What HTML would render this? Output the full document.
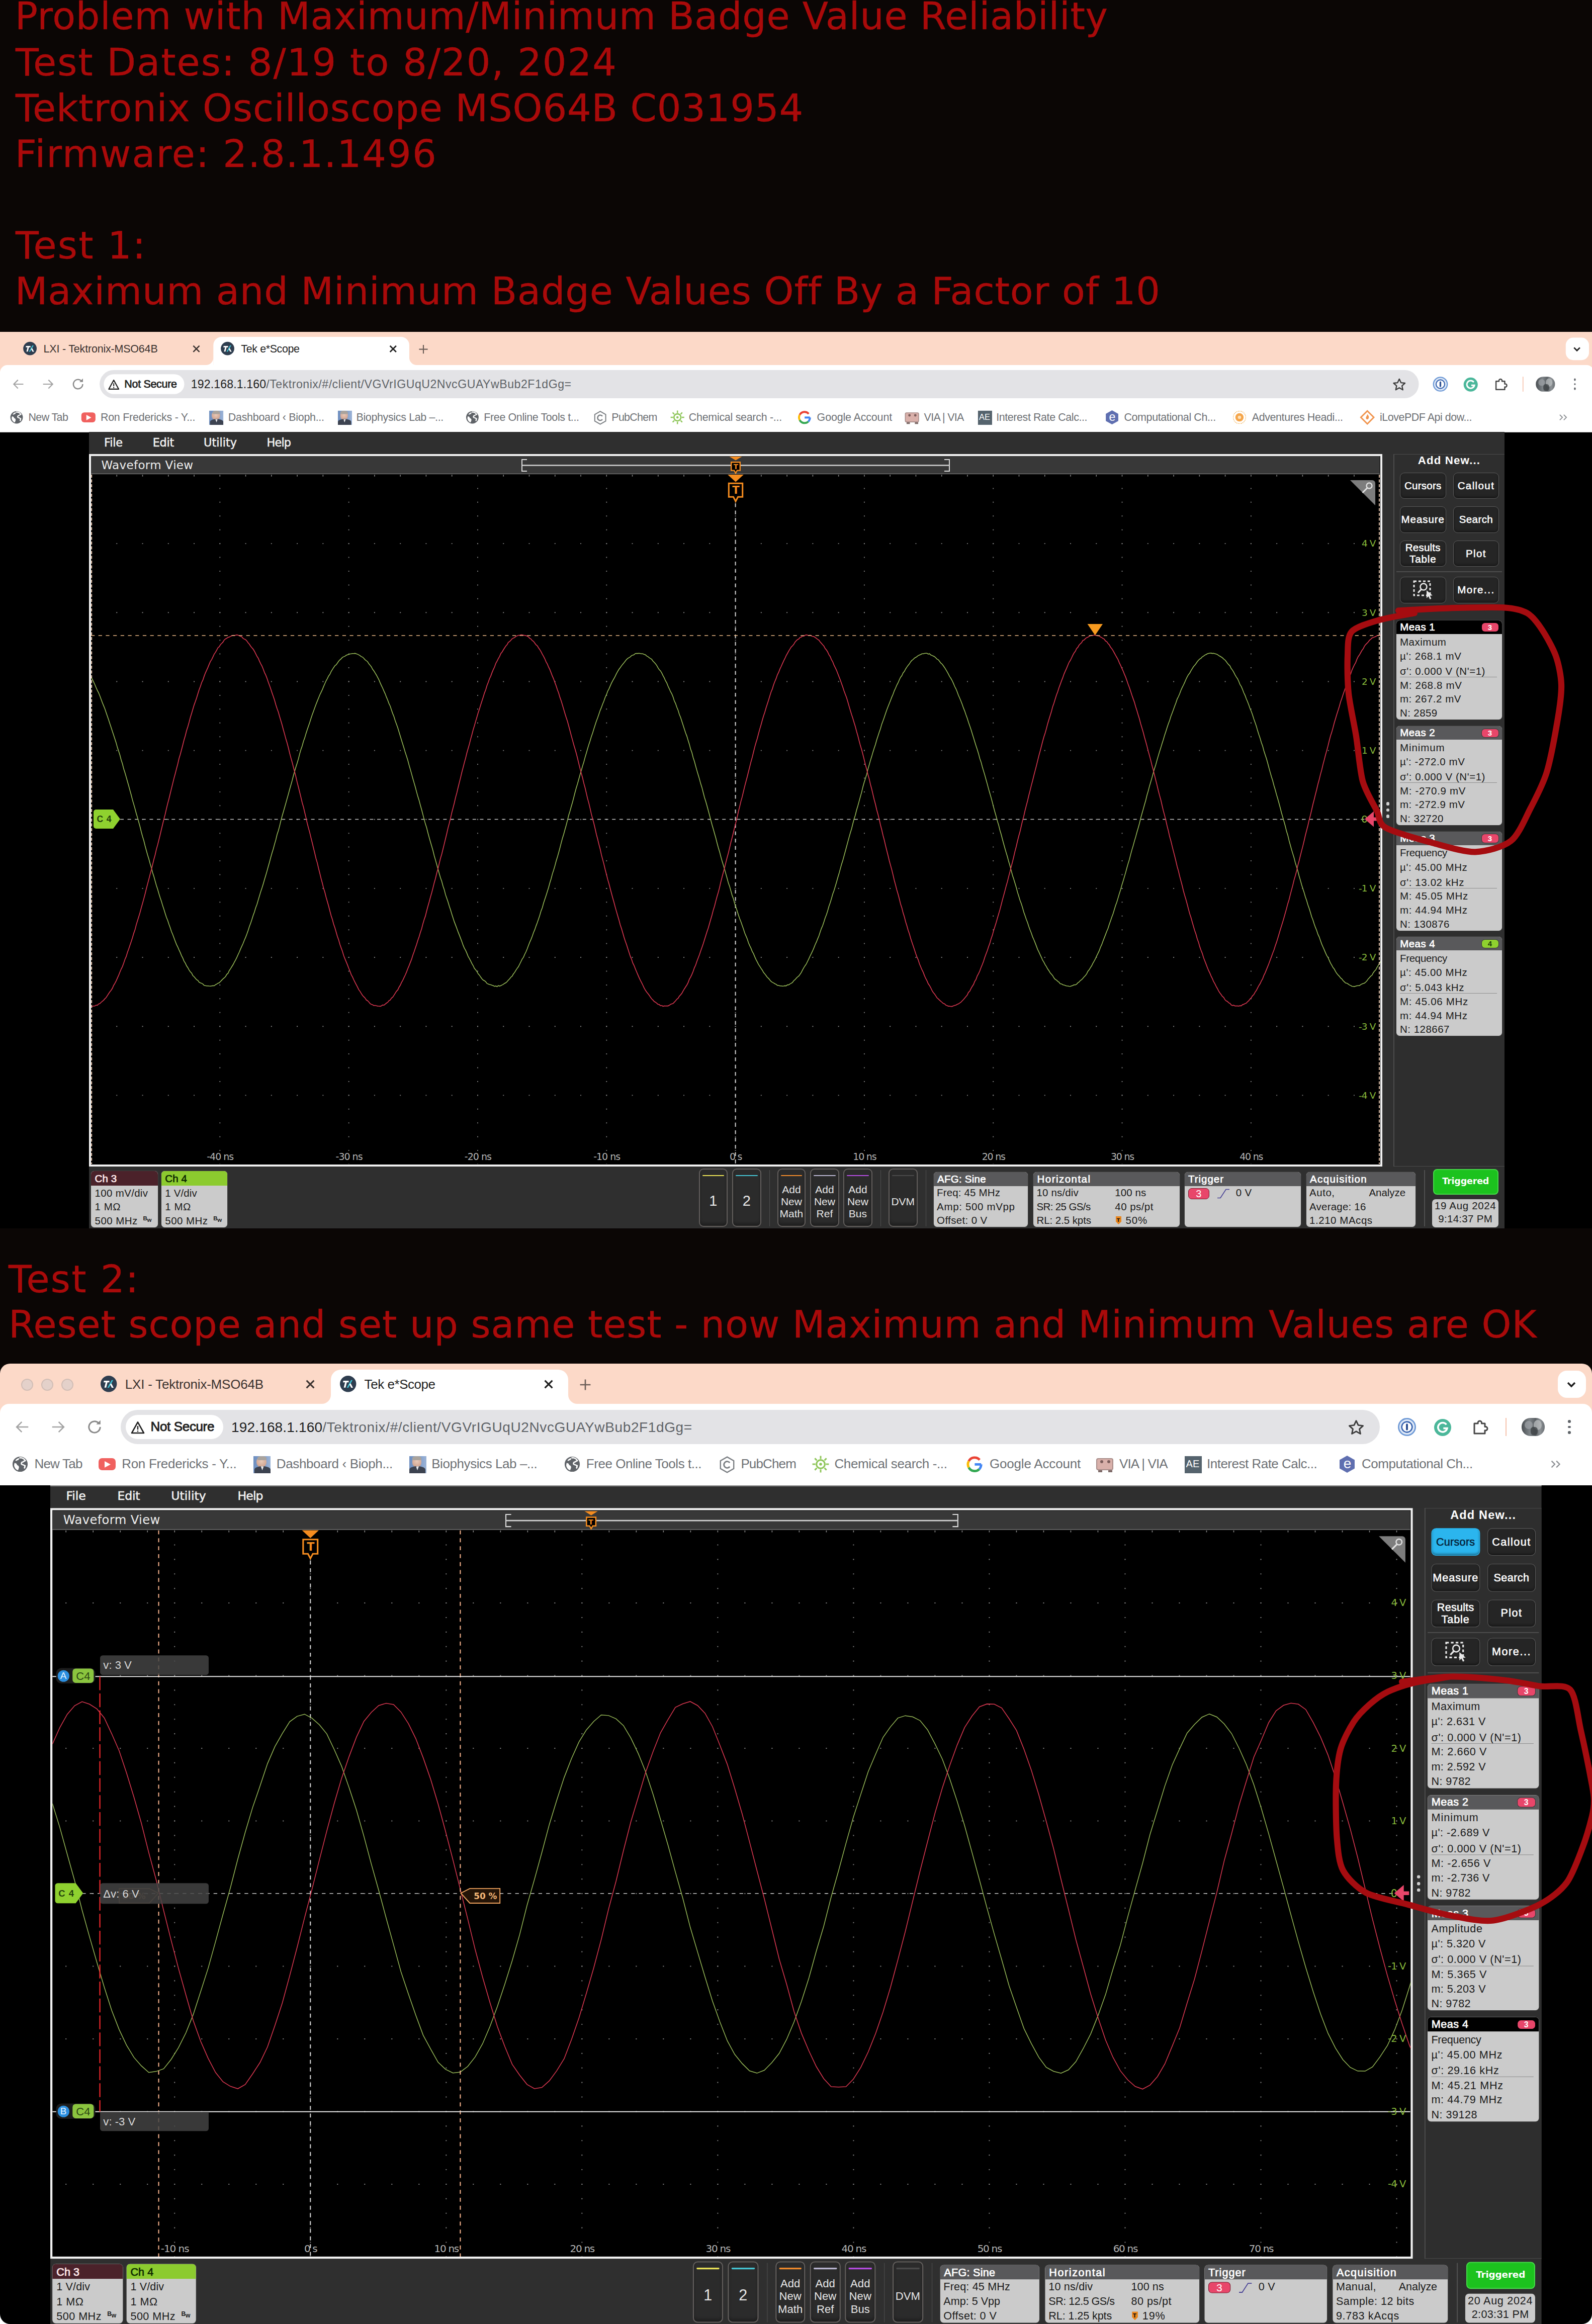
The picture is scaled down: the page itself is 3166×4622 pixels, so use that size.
<!DOCTYPE html>
<html lang="en"><head><meta charset="utf-8"><title>Maximum/Minimum Badge Value Reliability</title><style>
html,body{margin:0;padding:0}
html{width:3166px;height:4622px;overflow:hidden;background:#0b0605}
body{width:3166px;height:4622px;background:#0b0605;position:relative;overflow:hidden}
.b{position:absolute;box-sizing:border-box}
.t{position:absolute;white-space:pre}
svg{position:absolute;overflow:visible}
.ss{position:absolute;left:0;width:3166px;overflow:hidden;background:#000}
.sc{position:absolute;transform-origin:0 0}
</style></head><body>
<span class="t" style="left:29.70px;top:-12.65px;font:400 75px/90.0px 'DejaVu Sans',sans-serif;color:#a90a0a;letter-spacing:0.683px;-webkit-text-stroke:0.45px #a90a0a;">Problem with Maximum/Minimum Badge Value Reliability</span><span class="t" style="left:31.00px;top:78.55px;font:400 75px/90.0px 'DejaVu Sans',sans-serif;color:#a90a0a;letter-spacing:1.988px;-webkit-text-stroke:0.45px #a90a0a;">Test Dates: 8/19 to 8/20, 2024</span><span class="t" style="left:31.00px;top:169.65px;font:400 75px/90.0px 'DejaVu Sans',sans-serif;color:#a90a0a;letter-spacing:0.838px;-webkit-text-stroke:0.45px #a90a0a;">Tektronix Oscilloscope MSO64B C031954</span><span class="t" style="left:29.70px;top:260.75px;font:400 75px/90.0px 'DejaVu Sans',sans-serif;color:#a90a0a;letter-spacing:2.081px;-webkit-text-stroke:0.45px #a90a0a;">Firmware: 2.8.1.1496</span><span class="t" style="left:31.00px;top:442.95px;font:400 75px/90.0px 'DejaVu Sans',sans-serif;color:#a90a0a;letter-spacing:2.311px;-webkit-text-stroke:0.45px #a90a0a;">Test 1:</span><span class="t" style="left:29.70px;top:534.05px;font:400 75px/90.0px 'DejaVu Sans',sans-serif;color:#a90a0a;letter-spacing:0.866px;-webkit-text-stroke:0.45px #a90a0a;">Maximum and Minimum Badge Values Off By a Factor of 10</span>
<div class="ss" style="top:659.7px;height:1783px"><div class="sc" style="left:0;top:0;transform:scale(1.651);width:1919.6px;height:121px"><div class="b" style="left:0.00px;top:0.00px;width:1919.60px;height:56.00px;background:#fcd9c8;"></div><div class="b" style="left:0.00px;top:40.00px;width:1919.60px;height:81.00px;background:#fff;border-radius:9px 9px 0 0;"></div><svg style="left:27.70px;top:12.30px" width="16.2" height="16.2" viewBox="0 0 20 20"><circle cx="10" cy="10" r="10" fill="#2e3d4f"/><path d="M4.2 6.2h6.6v2h-2.3l-1.6 6.4h-2.2l1.6-6.4h-2.6z" fill="#fff"/><path d="M13.6 5.4l-5.2 9.4h1.9l5.2-9.4z" fill="#3ec1d3"/><path d="M11.6 10.6l2.2 4.2h2.3l-2.9-5.4z" fill="#fff"/></svg><span class="t" style="left:52.40px;top:12.70px;font:400 13px/15.6px 'Liberation Sans',sans-serif;color:#3b3330;letter-spacing:-0.110px;">LXI - Tektronix-MSO64B</span><svg style="left:231.50px;top:16px" width="9" height="9" viewBox="0 0 9 9"><path d="M.8.8l7.4 7.4M8.2.8L.8 8.2" stroke="#3b3330" stroke-width="1.5" fill="none"/></svg><div class="b" style="left:257.00px;top:6.00px;width:236.00px;height:35.00px;background:#fff;border-radius:10px 10px 0 0;"></div><svg style="left:248.00px;top:31px" width="9" height="9" viewBox="0 0 9 9"><path d="M9 0v9H0A9 9 0 0 0 9 0z" fill="#fff"/></svg><svg style="left:493.00px;top:31px" width="9" height="9" viewBox="0 0 9 9"><path d="M0 0v9h9A9 9 0 0 1 0 0z" fill="#fff"/></svg><svg style="left:265.60px;top:12.30px" width="16.2" height="16.2" viewBox="0 0 20 20"><circle cx="10" cy="10" r="10" fill="#2e3d4f"/><path d="M4.2 6.2h6.6v2h-2.3l-1.6 6.4h-2.2l1.6-6.4h-2.6z" fill="#fff"/><path d="M13.6 5.4l-5.2 9.4h1.9l5.2-9.4z" fill="#3ec1d3"/><path d="M11.6 10.6l2.2 4.2h2.3l-2.9-5.4z" fill="#fff"/></svg><span class="t" style="left:290.30px;top:12.70px;font:400 13px/15.6px 'Liberation Sans',sans-serif;color:#1f1f1f;letter-spacing:-0.227px;">Tek e*Scope</span><svg style="left:469.20px;top:16px" width="9" height="9" viewBox="0 0 9 9"><path d="M.8.8l7.4 7.4M8.2.8L.8 8.2" stroke="#1f1f1f" stroke-width="1.6" fill="none"/></svg><svg style="left:504.00px;top:14.5px" width="12" height="12" viewBox="0 0 12 12"><path d="M6 .8v10.4M.8 6h10.4" stroke="#6b5e58" stroke-width="1.3" fill="none"/></svg><div class="b" style="left:1885.50px;top:7.00px;width:28.00px;height:27.00px;background:#fff;border-radius:9px;"></div><svg style="left:1895.00px;top:17.5px" width="9" height="6" viewBox="0 0 9 6"><path d="M1 1l3.5 3.5L8 1" stroke="#1f1f1f" stroke-width="1.7" fill="none"/></svg><svg style="left:15.20px;top:56px" width="14" height="14" viewBox="0 0 16 16"><g><path d="M15 8H2M7.6 2.2L1.8 8l5.8 5.8" stroke="#a3a3a3" stroke-width="1.5" fill="none"/></g></svg><svg style="left:50.90px;top:56px" width="14" height="14" viewBox="0 0 16 16"><g transform="translate(16 0) scale(-1 1)"><path d="M15 8H2M7.6 2.2L1.8 8l5.8 5.8" stroke="#a3a3a3" stroke-width="1.5" fill="none"/></g></svg><svg style="left:85.90px;top:55px" width="16" height="16" viewBox="0 0 16 16"><path d="M13.6 8a5.6 5.6 0 1 1-1.7-4" stroke="#8a8a8a" stroke-width="1.5" fill="none"/><path d="M13.9 1.2v4.2H9.7z" fill="#8a8a8a"/></svg><div class="b" style="left:120.00px;top:46.20px;width:1588.60px;height:33.60px;background:#e3e3e6;border-radius:17px;"></div><div class="b" style="left:125.00px;top:51.00px;width:97.00px;height:24.00px;background:#fff;border-radius:12px;"></div><svg style="left:130px;top:56.5px" width="14" height="13" viewBox="0 0 14 13"><path d="M7 1.2L13 12H1z" stroke="#1f1f1f" stroke-width="1.3" fill="none" stroke-linejoin="round"/><path d="M7 5v3.6M7 9.6v1.2" stroke="#1f1f1f" stroke-width="1.2"/></svg><span class="t" style="left:149.80px;top:55.40px;font:400 13px/15.6px 'Liberation Sans',sans-serif;color:#1f1f1f;letter-spacing:-0.183px;-webkit-text-stroke:0.45px #1f1f1f;">Not Secure</span><span class="t" style="left:230.00px;top:54.95px;font:400 14px/16.8px 'Liberation Sans',sans-serif;color:#1f1f1f;letter-spacing:0.082px;">192.168.1.160</span><span class="t" style="left:320.60px;top:54.95px;font:400 14px/16.8px 'Liberation Sans',sans-serif;color:#5f6368;letter-spacing:0.311px;">/Tektronix/#/client/VGVrIGUqU2NvcGUAYwBub2F1dGg=</span><svg style="left:1676.90px;top:54.5px" width="17" height="17" viewBox="0 0 24 24"><path d="M12 2.6l2.9 6.2 6.7.8-5 4.6 1.4 6.7-6-3.4-6 3.4 1.400-6.700-5-4.600 6.700-.800z" stroke="#3c3c3c" stroke-width="2" fill="none" stroke-linejoin="round"/></svg><svg style="left:1726.20px;top:54px" width="18" height="18" viewBox="0 0 18 18"><circle cx="9" cy="9" r="8.3" fill="#dfe9f7" stroke="#6f9ad6" stroke-width="1.4"/><circle cx="9" cy="9" r="5.2" fill="#fff" stroke="#3b66b0" stroke-width="1.3"/><rect x="8" y="5.6" width="2" height="6.8" rx="1" fill="#2c4f91"/></svg><svg style="left:1762.90px;top:54.5px" width="17" height="17" viewBox="0 0 17 17"><circle cx="8.500" cy="8.500" r="8.500" fill="#4bb79a"/><path d="M12.2 5.600A4.600 4.600 0 1 0 13 9.300H9.200" stroke="#fff" stroke-width="1.8" fill="none"/></svg><svg style="left:1799.10px;top:54px" width="18" height="18" viewBox="0 0 18 18"><path d="M3 5.500h3.600a1.900 1.900 0 1 1 3.600 0H13.500v3.300a1.900 1.900 0 1 1 0 3.600V15.500H3z" stroke="#474747" stroke-width="1.5" fill="none" stroke-linejoin="round"/></svg><div class="b" style="left:1833.70px;top:54.00px;width:1.20px;height:18.00px;background:#f6c3ae;"></div><div class="b" style="left:1849.80px;top:54.30px;width:23.00px;height:17.50px;border-radius:9px/8.7px;overflow:hidden;background:linear-gradient(90deg,#4a4e52 0,#7d8387 35%,#5a5f63 60%,#8d9296 80%,#6b7074 100%);"><div class="b" style="left:3.00px;top:3.00px;width:8.00px;height:8.00px;border-radius:50%;background:#9ea3a6;opacity:.7;"></div><div class="b" style="left:12.00px;top:1.50px;width:8.00px;height:10.00px;border-radius:50%;background:#b9bdbf;opacity:.75;"></div><div class="b" style="left:9.00px;top:9.00px;width:7.00px;height:8.00px;background:#3f4346;border-radius:40%;opacity:.8;"></div></div><div class="b" style="left:1895.60px;top:56.00px;width:2.80px;height:2.80px;background:#5f6368;border-radius:50%;"></div><div class="b" style="left:1895.60px;top:61.60px;width:2.80px;height:2.80px;background:#5f6368;border-radius:50%;"></div><div class="b" style="left:1895.60px;top:67.20px;width:2.80px;height:2.80px;background:#5f6368;border-radius:50%;"></div><svg style="left:11.70px;top:95.20px" width="16" height="16" viewBox="0 0 20 20"><circle cx="10" cy="10" r="9.4" fill="#5f6368"/><path d="M3 8.5c2 .2 3 1.2 3.2 2.6 1.6.4 2.6 1.4 2.4 3.2l-1.2 3.4c-2.6-.9-4.6-3.4-4.9-6.4z" fill="#fff"/><path d="M9 2.2c3-.5 6 .9 7.4 3.4-1 .6-2 .6-2.8 1.6-1.4.2-2.2 1.2-2 2.6 1.4 1.4 3.2.6 4 2.2.6 1 .2 2.4-.6 3.2.9-1.2 1.3-2.6 1.3-4.1" fill="none" stroke="#fff" stroke-width="1.6"/><path d="M8.6 2.4c.4 1.6-.4 2.6-2 2.8-.8.8-2 .8-2.6.4 1-1.6 2.6-2.8 4.6-3.2z" fill="#fff"/></svg><span class="t" style="left:34.20px;top:95.30px;font:400 13px/15.6px 'Liberation Sans',sans-serif;color:#6e7175;letter-spacing:-0.378px;">New Tab</span><div class="b" style="left:98.40px;top:97.20px;width:17.00px;height:12.00px;background:#f0615f;border-radius:3.5px;"></div><svg style="left:104.40px;top:100.00px" width="6" height="6.400" viewBox="0 0 6 6.400"><path d="M0 0l6 3.200-6 3.200z" fill="#fff"/></svg><span class="t" style="left:121.10px;top:95.30px;font:400 13px/15.6px 'Liberation Sans',sans-serif;color:#6e7175;letter-spacing:-0.152px;">Ron Fredericks - Y...</span><div class="b" style="left:252.30px;top:94.70px;width:17.00px;height:17.00px;background:linear-gradient(90deg,#6f8fc0 0,#7d9ccb 55%,#9db4d6 100%);overflow:hidden;"><div class="b" style="left:3.20px;top:1.60px;width:9.60px;height:9.40px;border-radius:45% 45% 50% 50%;background:radial-gradient(circle at 50% 40%,#e8c9b8 0,#d5ab98 60%,#b88d7c 100%);"></div><div class="b" style="left:3.40px;top:0.80px;width:9.20px;height:3.60px;background:#a9a39d;border-radius:50% 50% 20% 20%;"></div><div class="b" style="left:0.50px;top:10.60px;width:16.00px;height:7.00px;background:#3c4250;border-radius:50% 50% 0 0;"></div><div class="b" style="left:7.00px;top:10.40px;width:3.00px;height:4.00px;background:#e9e9ec;clip-path:polygon(0 0,100% 0,50% 100%);"></div></div><span class="t" style="left:274.90px;top:95.30px;font:400 13px/15.6px 'Liberation Sans',sans-serif;color:#6e7175;letter-spacing:-0.182px;">Dashboard ‹ Bioph...</span><div class="b" style="left:406.50px;top:94.70px;width:17.00px;height:17.00px;background:linear-gradient(90deg,#6f8fc0 0,#7d9ccb 55%,#9db4d6 100%);overflow:hidden;"><div class="b" style="left:3.20px;top:1.60px;width:9.60px;height:9.40px;border-radius:45% 45% 50% 50%;background:radial-gradient(circle at 50% 40%,#e8c9b8 0,#d5ab98 60%,#b88d7c 100%);"></div><div class="b" style="left:3.40px;top:0.80px;width:9.20px;height:3.60px;background:#a9a39d;border-radius:50% 50% 20% 20%;"></div><div class="b" style="left:0.50px;top:10.60px;width:16.00px;height:7.00px;background:#3c4250;border-radius:50% 50% 0 0;"></div><div class="b" style="left:7.00px;top:10.40px;width:3.00px;height:4.00px;background:#e9e9ec;clip-path:polygon(0 0,100% 0,50% 100%);"></div></div><span class="t" style="left:429.10px;top:95.30px;font:400 13px/15.6px 'Liberation Sans',sans-serif;color:#6e7175;letter-spacing:-0.211px;">Biophysics Lab –...</span><svg style="left:560.80px;top:95.20px" width="16" height="16" viewBox="0 0 20 20"><circle cx="10" cy="10" r="9.4" fill="#5f6368"/><path d="M3 8.5c2 .2 3 1.2 3.2 2.6 1.6.4 2.6 1.4 2.4 3.2l-1.2 3.4c-2.6-.9-4.6-3.4-4.9-6.4z" fill="#fff"/><path d="M9 2.2c3-.5 6 .9 7.4 3.4-1 .6-2 .6-2.8 1.6-1.4.2-2.2 1.2-2 2.6 1.4 1.4 3.2.6 4 2.2.6 1 .2 2.4-.6 3.2.9-1.2 1.3-2.6 1.3-4.1" fill="none" stroke="#fff" stroke-width="1.6"/><path d="M8.6 2.4c.4 1.6-.4 2.6-2 2.8-.8.8-2 .8-2.6.4 1-1.6 2.6-2.8 4.6-3.2z" fill="#fff"/></svg><span class="t" style="left:582.90px;top:95.30px;font:400 13px/15.6px 'Liberation Sans',sans-serif;color:#6e7175;letter-spacing:-0.232px;">Free Online Tools t...</span><svg style="left:714.60px;top:94.70px" width="16" height="17" viewBox="0 0 16 17"><path d="M8 .8l6.600 3.800v7.800L8 16.200 1.400 12.400V4.600z" stroke="#7b7f83" stroke-width="1.2" fill="none"/><path d="M10.600 6.600a3.200 3.200 0 1 0 0 3.800" stroke="#7b7f83" stroke-width="1.500" fill="none"/></svg><span class="t" style="left:736.70px;top:95.30px;font:400 13px/15.6px 'Liberation Sans',sans-serif;color:#6e7175;letter-spacing:-0.430px;">PubChem</span><svg style="left:806.70px;top:94.20px" width="18" height="18" viewBox="0 0 18 18"><circle cx="9" cy="9" r="4.200" stroke="#8fc65a" stroke-width="1.600" fill="none"/><circle cx="9" cy="9" r="1.400" fill="#8fc65a"/><path d="M9 .800v3M9 14.200v3M.800 9h3M14.200 9h3M3.200 3.200l2 2M12.800 12.800l2 2M3.200 14.800l2-2M12.800 5.200l2-2" stroke="#8fc65a" stroke-width="1.500"/></svg><span class="t" style="left:829.70px;top:95.30px;font:400 13px/15.6px 'Liberation Sans',sans-serif;color:#6e7175;letter-spacing:-0.175px;">Chemical search -...</span><svg style="left:961.40px;top:95.20px" width="16" height="16" viewBox="0 0 16 16"><path d="M14.600 8.200H8.200" stroke="#4285f4" stroke-width="2.400" fill="none"/><path d="M13.100 3.700A6.600 6.600 0 0 0 2.300 4.900" stroke="#ea4335" stroke-width="2.400" fill="none"/><path d="M2.300 4.900a6.600 6.600 0 0 0 0 6.400" stroke="#fbbc05" stroke-width="2.400" fill="none"/><path d="M2.300 11.300a6.600 6.600 0 0 0 10.400 1.700" stroke="#34a853" stroke-width="2.400" fill="none"/><path d="M12.700 13a6.600 6.600 0 0 0 1.900-4.800" stroke="#4285f4" stroke-width="2.400" fill="none"/></svg><span class="t" style="left:984.00px;top:95.30px;font:400 13px/15.6px 'Liberation Sans',sans-serif;color:#6e7175;letter-spacing:-0.092px;">Google Account</span><div class="b" style="left:1090.10px;top:96.70px;width:17.00px;height:12.00px;background:#d9b0aa;border-radius:2px;border:1px solid #a98d8a;"></div><div class="b" style="left:1093.60px;top:99.20px;width:3.00px;height:3.00px;background:#7a5c5a;border-radius:50%;"></div><div class="b" style="left:1100.60px;top:99.20px;width:3.00px;height:3.00px;background:#7a5c5a;border-radius:50%;"></div><div class="b" style="left:1091.60px;top:108.70px;width:4.00px;height:2.50px;background:#7d6a68;"></div><div class="b" style="left:1101.60px;top:108.70px;width:4.00px;height:2.50px;background:#7d6a68;"></div><span class="t" style="left:1113.00px;top:95.30px;font:400 13px/15.6px 'Liberation Sans',sans-serif;color:#6e7175;letter-spacing:-0.432px;">VIA | VIA</span><div class="b" style="left:1177.50px;top:94.70px;width:17.00px;height:17.00px;background:#55636d;"></div><span class="t" style="left:1179.25px;top:97.33px;font:400 10px/12.0px 'Liberation Sans',sans-serif;color:#fff;letter-spacing:0.080px;">AE</span><span class="t" style="left:1200.00px;top:95.30px;font:400 13px/15.6px 'Liberation Sans',sans-serif;color:#6e7175;letter-spacing:-0.251px;">Interest Rate Calc...</span><svg style="left:1331.30px;top:94.20px" width="17" height="18" viewBox="0 0 17 18"><path d="M8.500 .500l7.500 4.200v8.600L8.500 17.500 1 13.300V4.700z" fill="#5f6fb0"/></svg><span class="t" style="left:1335.91px;top:94.15px;font:400 14px/16.8px 'Liberation Sans',sans-serif;color:#fff;">e</span><span class="t" style="left:1354.00px;top:95.30px;font:400 13px/15.6px 'Liberation Sans',sans-serif;color:#6e7175;letter-spacing:-0.237px;">Computational Ch...</span><div class="b" style="left:1485.30px;top:95.20px;width:16.00px;height:16.00px;border-radius:50%;border:1.5px dotted #f2b45a;"></div><div class="b" style="left:1488.30px;top:98.20px;width:10.00px;height:10.00px;background:#f5a54a;border-radius:50%;"></div><div class="b" style="left:1491.30px;top:101.20px;width:4.00px;height:4.00px;background:#fde2b8;border-radius:50%;"></div><span class="t" style="left:1508.00px;top:95.30px;font:400 13px/15.6px 'Liberation Sans',sans-serif;color:#6e7175;letter-spacing:-0.241px;">Adventures Headi...</span><svg style="left:1638.40px;top:94.20px" width="18" height="18" viewBox="0 0 18 18"><path d="M9 1.200L16.800 9 9 16.800 1.200 9z" stroke="#f0944d" stroke-width="1.700" fill="none"/><path d="M9 5.200c2 2.200 2.400 3.600 1.200 5.600-.800 1-2.400 .800-2.800-.600C7 8.600 8.600 7.400 9 5.200z" fill="#f0944d"/></svg><span class="t" style="left:1662.00px;top:95.30px;font:400 13px/15.6px 'Liberation Sans',sans-serif;color:#6e7175;letter-spacing:-0.286px;">iLovePDF Api dow...</span><svg style="left:1878.40px;top:99.20px" width="10" height="8" viewBox="0 0 10 8"><path d="M.800 .800L4 4 .800 7.200M5.600 .800L8.800 4 5.600 7.200" stroke="#8a8d91" stroke-width="1.100" fill="none"/></svg></div><div class="sc" style="left:177px;top:199.60px;width:2815px;height:1583.5px"><div class="b" style="left:0.00px;top:0.00px;width:2815.00px;height:1586.50px;background:#2f2f2f;"></div><span class="t" style="left:30.00px;top:7.41px;font:400 22.4px/26.88px 'DejaVu Sans',sans-serif;color:#f2f2f2;letter-spacing:-0.121px;-webkit-text-stroke:0.5px #f2f2f2;">File</span><span class="t" style="left:126.70px;top:7.41px;font:400 22.4px/26.88px 'DejaVu Sans',sans-serif;color:#f2f2f2;letter-spacing:-0.220px;-webkit-text-stroke:0.5px #f2f2f2;">Edit</span><span class="t" style="left:228.00px;top:7.41px;font:400 22.4px/26.88px 'DejaVu Sans',sans-serif;color:#f2f2f2;letter-spacing:0.016px;-webkit-text-stroke:0.5px #f2f2f2;">Utility</span><span class="t" style="left:353.60px;top:7.41px;font:400 22.4px/26.88px 'DejaVu Sans',sans-serif;color:#f2f2f2;letter-spacing:-0.892px;-webkit-text-stroke:0.5px #f2f2f2;">Help</span><div class="b" style="left:2571.60px;top:43.40px;width:22.00px;height:1417.00px;background:#303030;"></div><div class="b" style="left:0.00px;top:43.40px;width:2571.60px;height:1417.00px;background:#000;border:4.4px solid #f0f0f0;"></div><div class="b" style="left:4.40px;top:47.80px;width:2562.80px;height:36.20px;background:#383838;border-bottom:1.6px solid #8d8d8d;"></div><span class="t" style="left:24.50px;top:52.44px;font:400 23px/27.6px 'DejaVu Sans',sans-serif;color:#ededed;letter-spacing:0.335px;">Waveform View</span><svg style="left:4.4px;top:84.5px;overflow:hidden" width="2563.2" height="1371.5" viewBox="0 0 2563.2 1371.5"><g stroke="#808080" stroke-width="1.900" fill="none"><path d="M50.26 137.15H2563.2" stroke-dasharray="2 49.264"/><path d="M50.26 274.30H2563.2" stroke-dasharray="2 49.264"/><path d="M50.26 411.45H2563.2" stroke-dasharray="2 49.264"/><path d="M50.26 548.60H2563.2" stroke-dasharray="2 49.264"/><path d="M50.26 685.75H2563.2" stroke-dasharray="2 49.264"/><path d="M50.26 822.90H2563.2" stroke-dasharray="2 49.264"/><path d="M50.26 960.05H2563.2" stroke-dasharray="2 49.264"/><path d="M50.26 1097.20H2563.2" stroke-dasharray="2 49.264"/><path d="M50.26 1234.35H2563.2" stroke-dasharray="2 49.264"/><path d="M256.32 26.43V1371.5" stroke-dasharray="2 25.430"/><path d="M512.64 26.43V1371.5" stroke-dasharray="2 25.430"/><path d="M768.96 26.43V1371.5" stroke-dasharray="2 25.430"/><path d="M1025.28 26.43V1371.5" stroke-dasharray="2 25.430"/><path d="M1281.60 26.43V1371.5" stroke-dasharray="2 25.430"/><path d="M1537.92 26.43V1371.5" stroke-dasharray="2 25.430"/><path d="M1794.24 26.43V1371.5" stroke-dasharray="2 25.430"/><path d="M2050.56 26.43V1371.5" stroke-dasharray="2 25.430"/><path d="M2306.88 26.43V1371.5" stroke-dasharray="2 25.430"/></g><path d="M50.46 2H2563.2" stroke="#858585" stroke-width="3.400" stroke-dasharray="1.600 49.664" fill="none"/><path d="M1281.6 57V1371.5" stroke="#d2d2d2" stroke-width="2" stroke-dasharray="7.500 7" fill="none"/><path d="M58 685.5H2533.2" stroke="#c8c8c8" stroke-width="1.600" stroke-dasharray="7 7.600" fill="none"/><path d="M0.0,403.3 2.5,406.6 5.0,411.8 7.5,417.3 10.0,423.2 12.5,428.9 15.0,433.6 17.5,439.7 20.0,446.6 22.5,453.2 25.0,459.4 27.5,465.4 30.0,473.1 32.5,480.3 35.0,487.4 37.5,495.3 40.0,502.7 42.5,510.6 45.0,517.9 47.5,525.8 50.0,533.4 52.5,542.6 55.0,549.9 57.5,557.8 60.0,567.5 62.5,575.0 65.0,585.1 67.5,592.8 70.0,601.4 72.5,610.3 75.0,619.0 77.5,628.1 80.0,637.2 82.5,647.1 85.0,655.6 87.5,664.4 90.0,673.7 92.5,682.1 95.0,691.2 97.5,700.3 100.0,710.5 102.5,719.8 105.0,727.8 107.5,738.0 110.0,747.2 112.5,756.2 115.0,764.2 117.5,773.5 120.0,781.6 122.5,791.5 125.0,799.0 127.5,808.1 130.0,816.9 132.5,824.5 135.0,833.3 137.5,841.3 140.0,848.5 142.5,857.1 145.0,864.6 147.5,872.7 150.0,880.6 152.5,886.4 155.0,894.3 157.5,901.0 160.0,908.7 162.5,914.5 165.0,921.2 167.5,927.9 170.0,934.4 172.5,939.3 175.0,945.1 177.5,950.4 180.0,956.6 182.5,961.4 185.0,967.6 187.5,971.4 190.0,976.8 192.5,980.5 195.0,985.2 197.5,988.7 200.0,991.1 202.5,996.2 205.0,998.5 207.5,1001.5 210.0,1004.4 212.5,1005.8 215.0,1009.5 217.5,1010.7 220.0,1011.6 222.5,1013.1 225.0,1015.7 227.5,1016.3 230.0,1016.7 232.5,1016.8 235.0,1017.1 237.5,1017.2 240.0,1016.7 242.5,1016.4 245.0,1016.5 247.5,1014.5 250.0,1013.2 252.5,1011.4 255.0,1010.6 257.5,1008.0 260.0,1005.4 262.5,1002.8 265.0,1000.7 267.5,998.2 270.0,993.8 272.5,991.7 275.0,986.2 277.5,982.6 280.0,978.5 282.5,974.5 285.0,969.7 287.5,965.1 290.0,960.1 292.5,954.5 295.0,949.3 297.5,943.1 300.0,937.6 302.5,932.3 305.0,925.7 307.5,920.1 310.0,913.5 312.5,906.4 315.0,898.6 317.5,891.9 320.0,884.6 322.5,876.6 325.0,869.7 327.5,861.3 330.0,854.8 332.5,846.1 335.0,837.7 337.5,829.4 340.0,822.0 342.5,813.9 345.0,805.3 347.5,797.0 350.0,788.4 352.5,779.3 355.0,770.5 357.5,761.0 360.0,752.3 362.5,744.3 365.0,734.9 367.5,726.4 370.0,715.8 372.5,708.2 375.0,699.1 377.5,688.6 380.0,679.3 382.5,670.8 385.0,662.0 387.5,653.1 390.0,644.1 392.5,635.4 395.0,626.0 397.5,617.2 400.0,608.4 402.5,598.5 405.0,589.7 407.5,581.2 410.0,573.5 412.5,565.1 415.0,555.1 417.5,546.6 420.0,539.5 422.5,530.3 425.0,523.6 427.5,514.9 430.0,507.2 432.5,500.1 435.0,492.8 437.5,484.7 440.0,477.3 442.5,470.4 445.0,463.4 447.5,456.8 450.0,450.4 452.5,444.2 455.0,438.0 457.5,432.8 460.0,427.7 462.5,421.4 465.0,415.8 467.5,410.0 470.0,405.6 472.5,400.5 475.0,397.2 477.5,391.7 480.0,387.7 482.5,383.7 485.0,380.0 487.5,378.1 490.0,374.7 492.5,371.1 495.0,368.3 497.5,366.1 500.0,363.4 502.5,362.1 505.0,361.1 507.5,359.2 510.0,358.3 512.5,357.4 515.0,356.5 517.5,356.2 520.0,355.8 522.5,355.8 525.0,355.4 527.5,356.3 530.0,357.1 532.5,358.4 535.0,359.8 537.5,361.9 540.0,362.8 542.5,365.3 545.0,368.1 547.5,370.0 550.0,372.0 552.5,376.1 555.0,378.9 557.5,382.2 560.0,387.1 562.5,390.3 565.0,394.3 567.5,398.5 570.0,403.1 572.5,407.8 575.0,413.9 577.5,419.3 580.0,424.5 582.5,430.4 585.0,435.8 587.5,442.4 590.0,448.3 592.5,455.1 595.0,460.2 597.5,467.9 600.0,475.1 602.5,481.2 605.0,489.4 607.5,496.2 610.0,503.2 612.5,511.4 615.0,519.7 617.5,528.0 620.0,536.0 622.5,544.0 625.0,552.6 627.5,559.9 630.0,568.0 632.5,577.6 635.0,586.1 637.5,595.1 640.0,604.2 642.5,612.9 645.0,621.5 647.5,631.1 650.0,640.1 652.5,647.9 655.0,657.5 657.5,666.3 660.0,675.9 662.5,685.6 665.0,694.6 667.5,702.3 670.0,712.2 672.5,721.5 675.0,730.3 677.5,738.7 680.0,747.5 682.5,757.7 685.0,766.4 687.5,775.3 690.0,784.2 692.5,793.3 695.0,801.7 697.5,808.8 700.0,818.2 702.5,825.4 705.0,835.4 707.5,842.5 710.0,849.8 712.5,858.3 715.0,865.6 717.5,874.1 720.0,881.8 722.5,889.4 725.0,895.9 727.5,902.5 730.0,909.4 732.5,915.6 735.0,922.1 737.5,928.8 740.0,935.9 742.5,941.8 745.0,946.2 747.5,951.9 750.0,958.1 752.5,962.4 755.0,967.2 757.5,972.3 760.0,976.5 762.5,982.0 765.0,984.7 767.5,988.4 770.0,992.8 772.5,995.4 775.0,999.3 777.5,1002.7 780.0,1005.3 782.5,1006.5 785.0,1008.6 787.5,1012.0 790.0,1013.1 792.5,1014.0 795.0,1014.6 797.5,1015.5 800.0,1016.3 802.5,1017.7 805.0,1016.9 807.5,1018.3 810.0,1016.2 812.5,1017.1 815.0,1016.2 817.5,1014.9 820.0,1013.7 822.5,1011.7 825.0,1010.5 827.5,1008.2 830.0,1005.3 832.5,1002.7 835.0,999.5 837.5,997.4 840.0,993.0 842.5,989.9 845.0,985.7 847.5,981.9 850.0,978.5 852.5,973.5 855.0,968.5 857.5,963.4 860.0,959.9 862.5,954.0 865.0,949.0 867.5,943.0 870.0,936.3 872.5,929.9 875.0,924.4 877.5,918.1 880.0,910.7 882.5,904.9 885.0,897.6 887.5,891.1 890.0,883.7 892.5,876.2 895.0,867.6 897.5,861.3 900.0,852.0 902.5,844.5 905.0,837.0 907.5,829.0 910.0,821.0 912.5,811.8 915.0,803.7 917.5,794.1 920.0,786.5 922.5,778.1 925.0,768.5 927.5,760.6 930.0,751.7 932.5,742.5 935.0,732.6 937.5,723.3 940.0,715.3 942.5,706.0 945.0,697.3 947.5,687.4 950.0,677.3 952.5,669.4 955.0,660.2 957.5,651.7 960.0,642.1 962.5,632.3 965.0,623.0 967.5,614.9 970.0,605.7 972.5,596.8 975.0,588.8 977.5,579.6 980.0,571.7 982.5,562.4 985.0,554.0 987.5,545.2 990.0,536.9 992.5,529.4 995.0,521.1 997.5,514.0 1000.0,505.8 1002.5,497.9 1005.0,490.2 1007.5,483.7 1010.0,476.6 1012.5,469.1 1015.0,463.1 1017.5,456.2 1020.0,450.3 1022.5,443.0 1025.0,437.7 1027.5,430.7 1030.0,426.1 1032.5,420.4 1035.0,414.7 1037.5,409.8 1040.0,405.5 1042.5,400.9 1045.0,395.7 1047.5,391.1 1050.0,387.0 1052.5,383.8 1055.0,380.1 1057.5,376.9 1060.0,374.1 1062.5,370.7 1065.0,367.6 1067.5,365.4 1070.0,363.8 1072.5,362.4 1075.0,359.9 1077.5,358.9 1080.0,358.1 1082.5,355.8 1085.0,355.5 1087.5,355.6 1090.0,355.3 1092.5,355.8 1095.0,356.3 1097.5,356.3 1100.0,357.6 1102.5,358.2 1105.0,360.6 1107.5,361.8 1110.0,364.0 1112.5,365.6 1115.0,367.0 1117.5,370.7 1120.0,373.2 1122.5,376.0 1125.0,379.3 1127.5,383.8 1130.0,387.8 1132.5,390.2 1135.0,394.4 1137.5,399.7 1140.0,404.1 1142.5,410.0 1145.0,414.2 1147.5,420.5 1150.0,425.8 1152.5,431.5 1155.0,435.9 1157.5,442.0 1160.0,450.0 1162.5,455.1 1165.0,462.5 1167.5,468.4 1170.0,476.7 1172.5,482.8 1175.0,490.6 1177.5,498.2 1180.0,506.1 1182.5,513.8 1185.0,520.1 1187.5,528.6 1190.0,536.4 1192.5,546.1 1195.0,552.8 1197.5,562.8 1200.0,570.3 1202.5,579.7 1205.0,588.6 1207.5,597.0 1210.0,605.4 1212.5,614.6 1215.0,622.4 1217.5,632.3 1220.0,642.0 1222.5,649.8 1225.0,658.5 1227.5,667.7 1230.0,677.0 1232.5,686.7 1235.0,696.3 1237.5,704.8 1240.0,713.8 1242.5,722.5 1245.0,732.5 1247.5,741.7 1250.0,749.9 1252.5,759.6 1255.0,768.6 1257.5,776.5 1260.0,785.0 1262.5,793.9 1265.0,802.7 1267.5,812.1 1270.0,818.9 1272.5,827.7 1275.0,836.9 1277.5,843.4 1280.0,852.9 1282.5,860.1 1285.0,867.8 1287.5,875.8 1290.0,883.1 1292.5,889.2 1295.0,896.4 1297.5,903.5 1300.0,911.6 1302.5,917.4 1305.0,923.3 1307.5,931.0 1310.0,936.9 1312.5,941.9 1315.0,948.4 1317.5,952.6 1320.0,958.9 1322.5,964.3 1325.0,969.2 1327.5,974.1 1330.0,977.8 1332.5,981.9 1335.0,985.5 1337.5,990.1 1340.0,992.9 1342.5,996.3 1345.0,999.8 1347.5,1001.9 1350.0,1004.9 1352.5,1008.0 1355.0,1009.7 1357.5,1010.9 1360.0,1012.5 1362.5,1013.6 1365.0,1015.7 1367.5,1015.7 1370.0,1016.8 1372.5,1016.7 1375.0,1017.3 1377.5,1017.0 1380.0,1016.4 1382.5,1016.7 1385.0,1014.6 1387.5,1014.7 1390.0,1012.9 1392.5,1011.7 1395.0,1009.9 1397.5,1006.5 1400.0,1004.4 1402.5,1001.6 1405.0,999.0 1407.5,997.1 1410.0,993.7 1412.5,990.1 1415.0,985.1 1417.5,980.7 1420.0,976.7 1422.5,973.1 1425.0,968.0 1427.5,962.8 1430.0,957.3 1432.5,952.4 1435.0,947.2 1437.5,941.4 1440.0,935.0 1442.5,929.7 1445.0,923.4 1447.5,917.5 1450.0,909.8 1452.5,902.6 1455.0,897.0 1457.5,889.5 1460.0,881.4 1462.5,875.2 1465.0,867.5 1467.5,858.5 1470.0,851.4 1472.5,843.2 1475.0,834.3 1477.5,827.4 1480.0,819.3 1482.5,810.7 1485.0,801.7 1487.5,793.6 1490.0,784.4 1492.5,775.3 1495.0,767.6 1497.5,758.4 1500.0,749.3 1502.5,740.0 1505.0,730.6 1507.5,721.4 1510.0,712.5 1512.5,704.5 1515.0,694.5 1517.5,684.8 1520.0,677.3 1522.5,667.0 1525.0,658.7 1527.5,649.6 1530.0,640.5 1532.5,631.6 1535.0,621.3 1537.5,612.2 1540.0,604.4 1542.5,596.2 1545.0,586.1 1547.5,577.5 1550.0,568.6 1552.5,560.6 1555.0,551.9 1557.5,543.9 1560.0,536.7 1562.5,527.5 1565.0,520.1 1567.5,512.3 1570.0,505.3 1572.5,496.4 1575.0,489.7 1577.5,482.7 1580.0,475.2 1582.5,467.9 1585.0,461.5 1587.5,455.2 1590.0,449.0 1592.5,442.4 1595.0,436.7 1597.5,429.8 1600.0,424.5 1602.5,418.5 1605.0,414.0 1607.5,408.0 1610.0,403.0 1612.5,399.8 1615.0,394.2 1617.5,391.3 1620.0,386.5 1622.5,382.6 1625.0,379.2 1627.5,376.3 1630.0,372.2 1632.5,369.4 1635.0,367.5 1637.5,364.9 1640.0,363.5 1642.5,361.8 1645.0,359.8 1647.5,358.7 1650.0,357.7 1652.5,356.3 1655.0,356.2 1657.5,355.6 1660.0,355.3 1662.5,355.3 1665.0,356.8 1667.5,356.2 1670.0,358.5 1672.5,359.6 1675.0,360.8 1677.5,362.0 1680.0,364.3 1682.5,366.9 1685.0,368.1 1687.5,371.2 1690.0,374.6 1692.5,376.7 1695.0,380.0 1697.5,383.7 1700.0,387.6 1702.5,391.8 1705.0,396.3 1707.5,401.4 1710.0,405.0 1712.5,409.5 1715.0,414.9 1717.5,421.0 1720.0,425.8 1722.5,431.7 1725.0,438.7 1727.5,444.2 1730.0,450.2 1732.5,456.8 1735.0,463.9 1737.5,470.1 1740.0,477.4 1742.5,484.2 1745.0,492.2 1747.5,499.5 1750.0,506.8 1752.5,514.9 1755.0,522.9 1757.5,531.3 1760.0,539.2 1762.5,546.8 1765.0,554.9 1767.5,564.5 1770.0,571.4 1772.5,581.0 1775.0,589.4 1777.5,597.6 1780.0,606.8 1782.5,615.6 1785.0,625.1 1787.5,633.8 1790.0,642.4 1792.5,651.6 1795.0,661.5 1797.5,670.7 1800.0,679.4 1802.5,688.9 1805.0,696.9 1807.5,707.0 1810.0,715.3 1812.5,725.0 1815.0,734.3 1817.5,743.2 1820.0,751.9 1822.5,760.0 1825.0,769.6 1827.5,777.7 1830.0,787.1 1832.5,796.7 1835.0,804.2 1837.5,812.5 1840.0,820.7 1842.5,830.4 1845.0,838.2 1847.5,846.4 1850.0,853.1 1852.5,861.0 1855.0,869.9 1857.5,877.0 1860.0,884.6 1862.5,890.8 1865.0,898.7 1867.5,905.5 1870.0,911.7 1872.5,919.1 1875.0,924.8 1877.5,930.9 1880.0,937.4 1882.5,944.1 1885.0,949.1 1887.5,954.6 1890.0,959.9 1892.5,965.7 1895.0,969.7 1897.5,974.6 1900.0,978.3 1902.5,983.0 1905.0,986.5 1907.5,990.8 1910.0,993.6 1912.5,996.4 1915.0,1000.8 1917.5,1003.8 1920.0,1005.1 1922.5,1007.6 1925.0,1009.4 1927.5,1012.4 1930.0,1012.7 1932.5,1014.4 1935.0,1014.9 1937.5,1015.9 1940.0,1016.7 1942.5,1017.1 1945.0,1017.5 1947.5,1017.7 1950.0,1016.8 1952.5,1016.0 1955.0,1014.6 1957.5,1014.8 1960.0,1013.4 1962.5,1010.7 1965.0,1008.9 1967.5,1006.1 1970.0,1004.5 1972.5,1001.7 1975.0,998.8 1977.5,996.3 1980.0,992.9 1982.5,987.7 1985.0,984.8 1987.5,980.6 1990.0,976.8 1992.5,971.7 1995.0,967.4 1997.5,962.7 2000.0,957.2 2002.5,952.2 2005.0,946.9 2007.5,940.0 2010.0,934.7 2012.5,927.8 2015.0,921.4 2017.5,914.9 2020.0,908.2 2022.5,902.5 2025.0,894.5 2027.5,887.4 2030.0,880.1 2032.5,873.5 2035.0,865.2 2037.5,857.0 2040.0,850.3 2042.5,841.9 2045.0,833.4 2047.5,825.7 2050.0,816.5 2052.5,808.6 2055.0,800.1 2057.5,791.6 2060.0,782.3 2062.5,773.4 2065.0,765.5 2067.5,755.6 2070.0,746.4 2072.5,738.1 2075.0,728.9 2077.5,720.6 2080.0,711.3 2082.5,702.7 2085.0,693.7 2087.5,683.2 2090.0,674.2 2092.5,665.6 2095.0,656.5 2097.5,648.0 2100.0,637.5 2102.5,629.1 2105.0,619.4 2107.5,611.0 2110.0,602.4 2112.5,593.1 2115.0,584.6 2117.5,576.9 2120.0,567.6 2122.5,559.1 2125.0,550.8 2127.5,543.1 2130.0,534.7 2132.5,527.0 2135.0,518.4 2137.5,511.0 2140.0,503.1 2142.5,495.5 2145.0,488.9 2147.5,480.8 2150.0,474.3 2152.5,467.6 2155.0,460.5 2157.5,454.1 2160.0,446.4 2162.5,441.5 2165.0,435.7 2167.5,429.0 2170.0,423.4 2172.5,418.5 2175.0,413.1 2177.5,407.2 2180.0,402.1 2182.5,397.7 2185.0,394.7 2187.5,389.8 2190.0,385.8 2192.5,381.8 2195.0,379.0 2197.5,375.7 2200.0,372.0 2202.5,369.0 2205.0,366.7 2207.5,365.1 2210.0,362.3 2212.5,360.9 2215.0,358.9 2217.5,357.7 2220.0,356.3 2222.5,355.6 2225.0,355.0 2227.5,354.9 2230.0,355.6 2232.5,355.3 2235.0,356.1 2237.5,356.8 2240.0,357.6 2242.5,359.6 2245.0,361.0 2247.5,362.5 2250.0,364.2 2252.5,366.6 2255.0,368.5 2257.5,371.5 2260.0,375.1 2262.5,377.9 2265.0,380.3 2267.5,385.6 2270.0,388.6 2272.5,392.8 2275.0,397.8 2277.5,402.2 2280.0,405.7 2282.5,411.0 2285.0,417.4 2287.5,421.1 2290.0,427.1 2292.5,433.8 2295.0,438.9 2297.5,445.8 2300.0,451.5 2302.5,457.9 2305.0,465.3 2307.5,471.0 2310.0,478.0 2312.5,485.9 2315.0,493.1 2317.5,500.2 2320.0,509.1 2322.5,517.0 2325.0,524.3 2327.5,532.9 2330.0,539.7 2332.5,549.2 2335.0,557.1 2337.5,564.6 2340.0,573.3 2342.5,582.9 2345.0,591.9 2347.5,600.7 2350.0,608.5 2352.5,618.3 2355.0,626.5 2357.5,635.9 2360.0,644.3 2362.5,653.2 2365.0,662.5 2367.5,672.5 2370.0,681.1 2372.5,689.7 2375.0,698.8 2377.5,709.1 2380.0,716.9 2382.5,727.4 2385.0,736.5 2387.5,745.6 2390.0,753.9 2392.5,761.9 2395.0,772.0 2397.5,780.1 2400.0,788.2 2402.5,798.0 2405.0,806.4 2407.5,815.5 2410.0,823.5 2412.5,830.9 2415.0,839.8 2417.5,846.8 2420.0,855.5 2422.5,862.4 2425.0,870.5 2427.5,879.2 2430.0,885.4 2432.5,893.6 2435.0,900.4 2437.5,906.4 2440.0,914.2 2442.5,919.3 2445.0,926.5 2447.5,933.6 2450.0,939.3 2452.5,944.9 2455.0,950.9 2457.5,956.4 2460.0,960.1 2462.5,965.9 2465.0,971.4 2467.5,975.7 2470.0,980.3 2472.5,983.3 2475.0,988.1 2477.5,992.1 2480.0,994.9 2482.5,997.6 2485.0,1000.9 2487.5,1002.9 2490.0,1006.3 2492.5,1008.6 2495.0,1011.1 2497.5,1011.4 2500.0,1013.0 2502.5,1014.9 2505.0,1015.9 2507.5,1017.5 2510.0,1017.8 2512.5,1018.1 2515.0,1017.3 2517.5,1016.4 2520.0,1016.3 2522.5,1016.2 2525.0,1014.3 2527.5,1012.9 2530.0,1012.1 2532.5,1011.2 2535.0,1009.3 2537.5,1006.4 2540.0,1002.9 2542.5,1000.3 2545.0,997.4 2547.5,995.5 2550.0,990.7 2552.5,987.3 2555.0,984.8 2557.5,979.8 2560.0,975.8 2562.5,971.5 2565.0,966.9" stroke="#98bb58" stroke-width="1.550" fill="none"/><path d="M0.0,1056.7 2.5,1057.7 5.0,1056.8 7.5,1056.8 10.0,1055.0 12.5,1055.4 15.0,1052.7 17.5,1052.1 20.0,1049.5 22.5,1047.3 25.0,1045.4 27.5,1042.4 30.0,1040.0 32.5,1036.1 35.0,1032.3 37.5,1028.5 40.0,1025.5 42.5,1021.5 45.0,1015.7 47.5,1011.7 50.0,1006.8 52.5,1001.2 55.0,995.6 57.5,989.3 60.0,983.3 62.5,978.3 65.0,971.5 67.5,964.0 70.0,958.4 72.5,949.9 75.0,943.3 77.5,935.7 80.0,928.6 82.5,920.7 85.0,912.1 87.5,905.1 90.0,895.1 92.5,887.0 95.0,878.9 97.5,870.8 100.0,861.3 102.5,852.6 105.0,843.4 107.5,834.0 110.0,823.7 112.5,814.1 115.0,804.8 117.5,795.0 120.0,786.0 122.5,775.6 125.0,765.2 127.5,756.2 130.0,745.1 132.5,736.4 135.0,726.3 137.5,716.2 140.0,705.5 142.5,695.3 145.0,684.8 147.5,675.4 150.0,664.4 152.5,654.1 155.0,644.7 157.5,634.5 160.0,624.1 162.5,614.1 165.0,603.9 167.5,594.8 170.0,584.9 172.5,575.6 175.0,564.5 177.5,556.5 180.0,547.0 182.5,537.5 185.0,527.5 187.5,519.3 190.0,509.1 192.5,501.5 195.0,492.6 197.5,483.1 200.0,475.0 202.5,466.6 205.0,458.1 207.5,451.3 210.0,443.9 212.5,435.8 215.0,427.7 217.5,421.3 220.0,413.5 222.5,408.4 225.0,400.9 227.5,394.3 230.0,388.9 232.5,383.4 235.0,377.1 237.5,371.4 240.0,367.6 242.5,362.3 245.0,356.8 247.5,353.4 250.0,348.8 252.5,344.2 255.0,342.2 257.5,338.0 260.0,335.5 262.5,332.9 265.0,328.7 267.5,326.7 270.0,325.2 272.5,323.6 275.0,322.9 277.5,321.5 280.0,320.5 282.5,319.6 285.0,319.8 287.5,319.3 290.0,318.7 292.5,319.3 295.0,320.4 297.5,321.6 300.0,322.6 302.5,325.6 305.0,327.1 307.5,328.2 310.0,330.9 312.5,334.5 315.0,337.2 317.5,341.2 320.0,344.3 322.5,347.1 325.0,351.2 327.5,356.1 330.0,361.2 332.5,365.0 335.0,370.8 337.5,376.1 340.0,380.7 342.5,386.8 345.0,393.6 347.5,398.7 350.0,405.0 352.5,412.5 355.0,419.2 357.5,426.2 360.0,433.9 362.5,441.1 365.0,448.6 367.5,457.4 370.0,465.2 372.5,472.0 375.0,481.0 377.5,489.2 380.0,497.7 382.5,507.2 385.0,516.1 387.5,525.6 390.0,533.7 392.5,543.2 395.0,553.8 397.5,563.1 400.0,571.9 402.5,581.8 405.0,591.3 407.5,600.9 410.0,611.9 412.5,621.5 415.0,631.5 417.5,641.9 420.0,652.5 422.5,660.9 425.0,671.8 427.5,682.1 430.0,693.2 432.5,702.9 435.0,711.9 437.5,722.4 440.0,732.3 442.5,742.8 445.0,753.0 447.5,763.7 450.0,772.1 452.5,783.0 455.0,792.7 457.5,803.1 460.0,812.2 462.5,822.4 465.0,830.3 467.5,840.4 470.0,849.1 472.5,857.8 475.0,867.5 477.5,877.0 480.0,884.5 482.5,894.0 485.0,901.1 487.5,909.8 490.0,918.5 492.5,925.2 495.0,934.2 497.5,941.3 500.0,948.0 502.5,956.5 505.0,962.9 507.5,968.9 510.0,974.9 512.5,981.5 515.0,987.5 517.5,994.3 520.0,998.8 522.5,1004.5 525.0,1009.7 527.5,1014.4 530.0,1019.2 532.5,1024.4 535.0,1027.6 537.5,1031.8 540.0,1035.8 542.5,1038.3 545.0,1040.9 547.5,1044.8 550.0,1046.2 552.5,1048.7 555.0,1051.9 557.5,1053.6 560.0,1054.2 562.5,1055.9 565.0,1055.5 567.5,1056.2 570.0,1056.9 572.5,1057.0 575.0,1057.4 577.5,1056.5 580.0,1054.6 582.5,1055.2 585.0,1053.1 587.5,1051.0 590.0,1049.4 592.5,1046.2 595.0,1044.9 597.5,1041.1 600.0,1039.1 602.5,1035.4 605.0,1031.4 607.5,1027.3 610.0,1024.9 612.5,1019.5 615.0,1015.5 617.5,1009.8 620.0,1005.6 622.5,1000.1 625.0,995.0 627.5,989.1 630.0,982.5 632.5,976.6 635.0,970.1 637.5,963.9 640.0,955.8 642.5,949.1 645.0,941.6 647.5,934.3 650.0,925.9 652.5,919.0 655.0,910.6 657.5,903.3 660.0,893.4 662.5,884.9 665.0,877.9 667.5,867.8 670.0,858.5 672.5,849.8 675.0,840.2 677.5,831.8 680.0,822.1 682.5,811.9 685.0,803.2 687.5,792.8 690.0,783.8 692.5,773.3 695.0,763.0 697.5,754.7 700.0,744.5 702.5,734.4 705.0,724.0 707.5,713.7 710.0,702.6 712.5,693.4 715.0,683.1 717.5,672.1 720.0,662.6 722.5,653.0 725.0,641.9 727.5,632.9 730.0,622.2 732.5,612.1 735.0,602.4 737.5,591.8 740.0,582.4 742.5,572.6 745.0,563.6 747.5,553.2 750.0,544.5 752.5,535.9 755.0,525.9 757.5,517.0 760.0,507.3 762.5,499.3 765.0,490.4 767.5,482.0 770.0,473.3 772.5,466.1 775.0,457.8 777.5,450.1 780.0,442.2 782.5,434.1 785.0,427.7 787.5,419.2 790.0,413.0 792.5,405.7 795.0,400.6 797.5,393.6 800.0,387.6 802.5,382.5 805.0,375.3 807.5,370.9 810.0,365.8 812.5,361.6 815.0,355.8 817.5,352.7 820.0,348.5 822.5,344.5 825.0,340.7 827.5,338.1 830.0,333.4 832.5,331.9 835.0,329.2 837.5,326.4 840.0,324.9 842.5,323.9 845.0,321.6 847.5,320.6 850.0,319.5 852.5,319.5 855.0,318.6 857.5,318.5 860.0,319.4 862.5,319.7 865.0,320.1 867.5,321.2 870.0,322.6 872.5,325.5 875.0,326.8 877.5,329.9 880.0,331.6 882.5,334.9 885.0,338.3 887.5,340.3 890.0,344.5 892.5,347.9 895.0,352.1 897.5,357.2 900.0,361.3 902.5,366.3 905.0,372.3 907.5,376.7 910.0,382.7 912.5,387.6 915.0,394.1 917.5,400.7 920.0,406.3 922.5,413.4 925.0,420.0 927.5,427.7 930.0,434.3 932.5,442.9 935.0,449.7 937.5,458.1 940.0,466.5 942.5,475.0 945.0,483.1 947.5,490.5 950.0,499.8 952.5,509.0 955.0,518.6 957.5,527.6 960.0,536.9 962.5,545.2 965.0,554.0 967.5,563.7 970.0,574.4 972.5,584.4 975.0,593.8 977.5,602.8 980.0,613.6 982.5,622.5 985.0,633.4 987.5,644.1 990.0,653.1 992.5,663.6 995.0,674.9 997.5,684.2 1000.0,693.5 1002.5,704.0 1005.0,715.3 1007.5,724.5 1010.0,735.1 1012.5,744.3 1015.0,755.9 1017.5,765.4 1020.0,774.6 1022.5,785.2 1025.0,794.8 1027.5,804.9 1030.0,813.3 1032.5,823.0 1035.0,832.5 1037.5,841.8 1040.0,850.5 1042.5,860.1 1045.0,868.9 1047.5,877.5 1050.0,885.9 1052.5,895.4 1055.0,902.8 1057.5,911.3 1060.0,920.0 1062.5,927.8 1065.0,934.5 1067.5,942.4 1070.0,950.2 1072.5,957.9 1075.0,963.7 1077.5,971.5 1080.0,976.3 1082.5,982.7 1085.0,988.8 1087.5,994.6 1090.0,1000.3 1092.5,1005.7 1095.0,1010.3 1097.5,1015.5 1100.0,1020.9 1102.5,1025.3 1105.0,1028.9 1107.5,1032.0 1110.0,1035.3 1112.5,1039.1 1115.0,1042.5 1117.5,1044.9 1120.0,1047.8 1122.5,1049.2 1125.0,1051.2 1127.5,1053.4 1130.0,1053.8 1132.5,1056.2 1135.0,1055.8 1137.5,1057.3 1140.0,1056.7 1142.5,1056.7 1145.0,1056.5 1147.5,1056.6 1150.0,1055.3 1152.5,1053.5 1155.0,1052.6 1157.5,1051.7 1160.0,1049.1 1162.5,1046.5 1165.0,1043.3 1167.5,1041.5 1170.0,1037.3 1172.5,1034.6 1175.0,1031.6 1177.5,1026.9 1180.0,1022.7 1182.5,1018.8 1185.0,1015.0 1187.5,1010.1 1190.0,1003.3 1192.5,999.2 1195.0,993.8 1197.5,987.7 1200.0,980.6 1202.5,975.3 1205.0,967.7 1207.5,961.3 1210.0,954.8 1212.5,947.3 1215.0,940.2 1217.5,933.1 1220.0,925.0 1222.5,917.0 1225.0,909.1 1227.5,901.8 1230.0,893.1 1232.5,884.2 1235.0,875.8 1237.5,865.9 1240.0,858.3 1242.5,848.1 1245.0,839.0 1247.5,830.5 1250.0,821.1 1252.5,810.0 1255.0,800.3 1257.5,790.7 1260.0,781.7 1262.5,771.4 1265.0,761.5 1267.5,752.5 1270.0,741.9 1272.5,731.2 1275.0,721.7 1277.5,711.8 1280.0,701.3 1282.5,691.4 1285.0,681.3 1287.5,669.9 1290.0,660.1 1292.5,649.6 1295.0,640.9 1297.5,630.2 1300.0,619.9 1302.5,610.3 1305.0,601.0 1307.5,590.7 1310.0,580.9 1312.5,570.9 1315.0,562.1 1317.5,551.7 1320.0,541.6 1322.5,532.8 1325.0,524.7 1327.5,515.0 1330.0,505.9 1332.5,497.4 1335.0,488.3 1337.5,479.8 1340.0,472.4 1342.5,463.7 1345.0,455.9 1347.5,448.3 1350.0,440.0 1352.5,432.0 1355.0,426.1 1357.5,417.8 1360.0,411.3 1362.5,405.4 1365.0,398.1 1367.5,393.2 1370.0,386.7 1372.5,381.5 1375.0,375.8 1377.5,370.3 1380.0,365.5 1382.5,359.9 1385.0,355.5 1387.5,350.8 1390.0,346.9 1392.5,342.8 1395.0,340.5 1397.5,337.6 1400.0,333.2 1402.5,330.3 1405.0,328.0 1407.5,326.8 1410.0,323.8 1412.5,323.1 1415.0,320.8 1417.5,321.2 1420.0,319.6 1422.5,318.6 1425.0,319.2 1427.5,320.0 1430.0,319.1 1432.5,320.6 1435.0,321.7 1437.5,321.8 1440.0,323.8 1442.5,325.4 1445.0,327.6 1447.5,329.0 1450.0,332.6 1452.5,335.4 1455.0,338.2 1457.5,341.0 1460.0,345.8 1462.5,348.6 1465.0,352.7 1467.5,358.1 1470.0,361.7 1472.5,367.8 1475.0,372.0 1477.5,378.6 1480.0,383.7 1482.5,388.8 1485.0,395.2 1487.5,401.7 1490.0,408.0 1492.5,415.2 1495.0,422.2 1497.5,430.0 1500.0,436.8 1502.5,443.2 1505.0,451.5 1507.5,460.4 1510.0,468.7 1512.5,476.9 1515.0,484.4 1517.5,492.9 1520.0,501.0 1522.5,510.7 1525.0,519.2 1527.5,529.3 1530.0,538.6 1532.5,546.7 1535.0,556.3 1537.5,566.2 1540.0,576.8 1542.5,585.6 1545.0,596.3 1547.5,604.7 1550.0,615.8 1552.5,625.0 1555.0,635.6 1557.5,646.2 1560.0,655.5 1562.5,666.5 1565.0,675.2 1567.5,685.4 1570.0,696.7 1572.5,706.2 1575.0,717.2 1577.5,726.5 1580.0,737.4 1582.5,747.5 1585.0,757.3 1587.5,767.8 1590.0,776.9 1592.5,785.9 1595.0,796.1 1597.5,807.0 1600.0,816.1 1602.5,826.0 1605.0,834.2 1607.5,843.8 1610.0,854.0 1612.5,861.6 1615.0,871.6 1617.5,879.2 1620.0,889.2 1622.5,897.0 1625.0,905.9 1627.5,913.0 1630.0,922.0 1632.5,929.7 1635.0,937.0 1637.5,944.5 1640.0,952.2 1642.5,959.1 1645.0,964.8 1647.5,972.7 1650.0,978.8 1652.5,984.7 1655.0,989.6 1657.5,996.4 1660.0,1002.0 1662.5,1006.6 1665.0,1012.5 1667.5,1015.9 1670.0,1020.5 1672.5,1025.9 1675.0,1030.0 1677.5,1032.8 1680.0,1036.6 1682.5,1040.5 1685.0,1042.7 1687.5,1045.1 1690.0,1047.3 1692.5,1049.5 1695.0,1051.7 1697.5,1052.5 1700.0,1055.1 1702.5,1056.1 1705.0,1057.1 1707.5,1057.0 1710.0,1057.7 1712.5,1057.6 1715.0,1056.5 1717.5,1055.6 1720.0,1055.0 1722.5,1053.5 1725.0,1052.6 1727.5,1050.9 1730.0,1049.2 1732.5,1046.5 1735.0,1044.0 1737.5,1041.0 1740.0,1038.0 1742.5,1035.0 1745.0,1029.6 1747.5,1027.3 1750.0,1022.1 1752.5,1017.8 1755.0,1014.0 1757.5,1007.7 1760.0,1003.9 1762.5,996.8 1765.0,992.4 1767.5,987.0 1770.0,980.3 1772.5,974.3 1775.0,967.8 1777.5,959.7 1780.0,953.0 1782.5,946.5 1785.0,938.8 1787.5,932.1 1790.0,923.0 1792.5,916.1 1795.0,906.8 1797.5,899.1 1800.0,891.0 1802.5,882.2 1805.0,873.8 1807.5,865.4 1810.0,855.8 1812.5,845.9 1815.0,836.9 1817.5,827.6 1820.0,817.9 1822.5,809.4 1825.0,799.1 1827.5,789.9 1830.0,779.7 1832.5,770.4 1835.0,760.0 1837.5,749.1 1840.0,739.8 1842.5,728.8 1845.0,718.7 1847.5,710.1 1850.0,699.0 1852.5,688.3 1855.0,679.2 1857.5,668.0 1860.0,658.1 1862.5,648.7 1865.0,638.0 1867.5,628.4 1870.0,618.1 1872.5,608.8 1875.0,598.5 1877.5,588.9 1880.0,579.4 1882.5,569.1 1885.0,558.9 1887.5,550.0 1890.0,540.3 1892.5,530.5 1895.0,521.6 1897.5,513.9 1900.0,505.1 1902.5,495.4 1905.0,486.9 1907.5,479.1 1910.0,471.0 1912.5,461.4 1915.0,454.6 1917.5,446.3 1920.0,438.2 1922.5,431.7 1925.0,423.7 1927.5,417.1 1930.0,410.1 1932.5,403.9 1935.0,396.6 1937.5,390.8 1940.0,385.4 1942.5,379.3 1945.0,373.3 1947.5,369.5 1950.0,364.5 1952.5,359.1 1955.0,354.5 1957.5,351.3 1960.0,345.9 1962.5,343.4 1965.0,339.0 1967.5,336.3 1970.0,334.0 1972.5,329.7 1975.0,328.8 1977.5,326.2 1980.0,324.2 1982.5,323.3 1985.0,321.4 1987.5,320.5 1990.0,319.5 1992.5,319.9 1995.0,318.8 1997.5,319.7 2000.0,319.5 2002.5,320.7 2005.0,320.7 2007.5,322.7 2010.0,323.9 2012.5,325.8 2015.0,327.1 2017.5,330.8 2020.0,332.1 2022.5,335.8 2025.0,338.3 2027.5,343.0 2030.0,346.1 2032.5,349.9 2035.0,354.5 2037.5,359.2 2040.0,363.5 2042.5,367.9 2045.0,374.1 2047.5,379.2 2050.0,384.8 2052.5,390.3 2055.0,396.6 2057.5,402.4 2060.0,409.4 2062.5,416.7 2065.0,423.2 2067.5,430.7 2070.0,438.5 2072.5,445.6 2075.0,452.6 2077.5,461.4 2080.0,469.3 2082.5,477.7 2085.0,485.7 2087.5,495.5 2090.0,503.8 2092.5,512.3 2095.0,522.0 2097.5,530.8 2100.0,539.9 2102.5,549.9 2105.0,558.9 2107.5,568.1 2110.0,578.6 2112.5,587.2 2115.0,597.5 2117.5,607.7 2120.0,617.6 2122.5,628.2 2125.0,637.9 2127.5,646.7 2130.0,657.7 2132.5,668.4 2135.0,677.4 2137.5,687.5 2140.0,698.6 2142.5,708.2 2145.0,719.6 2147.5,728.3 2150.0,738.6 2152.5,748.6 2155.0,758.2 2157.5,768.5 2160.0,779.3 2162.5,787.9 2165.0,798.5 2167.5,807.9 2170.0,817.3 2172.5,827.7 2175.0,836.8 2177.5,845.0 2180.0,854.2 2182.5,863.9 2185.0,873.3 2187.5,880.8 2190.0,889.8 2192.5,898.6 2195.0,907.0 2197.5,914.1 2200.0,923.2 2202.5,929.9 2205.0,938.9 2207.5,946.0 2210.0,952.1 2212.5,960.5 2215.0,967.0 2217.5,973.4 2220.0,980.0 2222.5,986.2 2225.0,991.1 2227.5,997.1 2230.0,1002.1 2232.5,1008.2 2235.0,1012.4 2237.5,1017.6 2240.0,1022.0 2242.5,1026.9 2245.0,1030.8 2247.5,1034.0 2250.0,1037.7 2252.5,1039.6 2255.0,1044.1 2257.5,1046.5 2260.0,1047.7 2262.5,1050.4 2265.0,1051.5 2267.5,1054.5 2270.0,1055.8 2272.5,1055.2 2275.0,1056.7 2277.5,1056.6 2280.0,1056.7 2282.5,1056.9 2285.0,1056.1 2287.5,1056.4 2290.0,1054.1 2292.5,1053.4 2295.0,1051.9 2297.5,1051.0 2300.0,1048.3 2302.5,1046.2 2305.0,1042.7 2307.5,1040.3 2310.0,1036.3 2312.5,1034.0 2315.0,1029.4 2317.5,1025.8 2320.0,1020.8 2322.5,1016.2 2325.0,1012.3 2327.5,1006.8 2330.0,1002.6 2332.5,995.8 2335.0,990.8 2337.5,984.6 2340.0,978.6 2342.5,972.3 2345.0,965.5 2347.5,958.9 2350.0,951.8 2352.5,945.5 2355.0,937.5 2357.5,930.4 2360.0,922.4 2362.5,913.9 2365.0,905.6 2367.5,897.6 2370.0,889.5 2372.5,881.1 2375.0,872.0 2377.5,863.1 2380.0,853.4 2382.5,845.5 2385.0,835.4 2387.5,825.9 2390.0,816.6 2392.5,806.1 2395.0,797.8 2397.5,788.4 2400.0,777.1 2402.5,768.2 2405.0,758.0 2407.5,748.1 2410.0,738.6 2412.5,728.2 2415.0,717.2 2417.5,707.5 2420.0,698.0 2422.5,686.9 2425.0,677.3 2427.5,666.8 2430.0,655.8 2432.5,646.2 2435.0,635.9 2437.5,626.2 2440.0,615.4 2442.5,606.6 2445.0,596.1 2447.5,587.4 2450.0,576.6 2452.5,567.4 2455.0,557.5 2457.5,548.6 2460.0,539.4 2462.5,529.0 2465.0,519.5 2467.5,512.1 2470.0,503.1 2472.5,493.5 2475.0,485.3 2477.5,476.7 2480.0,469.1 2482.5,461.0 2485.0,452.0 2487.5,444.9 2490.0,437.3 2492.5,430.1 2495.0,423.0 2497.5,415.5 2500.0,409.2 2502.5,402.2 2505.0,396.6 2507.5,389.1 2510.0,383.4 2512.5,378.1 2515.0,373.9 2517.5,367.1 2520.0,362.0 2522.5,358.6 2525.0,354.0 2527.5,349.5 2530.0,346.3 2532.5,341.1 2535.0,337.8 2537.5,335.3 2540.0,332.7 2542.5,329.4 2545.0,327.3 2547.5,324.8 2550.0,324.1 2552.5,322.7 2555.0,321.9 2557.5,320.0 2560.0,320.0 2562.5,318.8 2565.0,319.9" stroke="#d6364f" stroke-width="1.650" fill="none"/><path d="M0 320.0H2563.2" stroke="#ecb885" stroke-width="1.600" stroke-dasharray="7.200 7.500" fill="none"/><path d="M1981.6 297.0h30.400L1996.8 319.5z" fill="#f79a1f"/><path d="M1.200 0V1371.5" stroke="#f8d6bd" stroke-width="1.800" stroke-dasharray="6 3.500" fill="none"/><path d="M2562.0 0V1371.5" stroke="#f8d6bd" stroke-width="1.800" stroke-dasharray="6 3.500" fill="none"/></svg><span class="t" style="left:2531.10px;top:211.20px;font:400 18.5px/22.2px 'DejaVu Sans',sans-serif;color:#88bb3b;letter-spacing:-0.969px;">4 V</span><span class="t" style="left:2531.10px;top:348.35px;font:400 18.5px/22.2px 'DejaVu Sans',sans-serif;color:#88bb3b;letter-spacing:-0.969px;">3 V</span><span class="t" style="left:2531.10px;top:485.50px;font:400 18.5px/22.2px 'DejaVu Sans',sans-serif;color:#88bb3b;letter-spacing:-0.969px;">2 V</span><span class="t" style="left:2531.10px;top:622.65px;font:400 18.5px/22.2px 'DejaVu Sans',sans-serif;color:#88bb3b;letter-spacing:-0.969px;">1 V</span><span class="t" style="left:2525.00px;top:896.95px;font:400 18.5px/22.2px 'DejaVu Sans',sans-serif;color:#88bb3b;letter-spacing:-0.871px;">-1 V</span><span class="t" style="left:2525.00px;top:1034.10px;font:400 18.5px/22.2px 'DejaVu Sans',sans-serif;color:#88bb3b;letter-spacing:-0.871px;">-2 V</span><span class="t" style="left:2525.00px;top:1171.25px;font:400 18.5px/22.2px 'DejaVu Sans',sans-serif;color:#88bb3b;letter-spacing:-0.871px;">-3 V</span><span class="t" style="left:2525.00px;top:1308.40px;font:400 18.5px/22.2px 'DejaVu Sans',sans-serif;color:#88bb3b;letter-spacing:-0.871px;">-4 V</span><svg style="left:2507.500px;top:96px" width="50" height="50" viewBox="0 0 50 50"><path d="M0 0h44a6 6 0 0 1 6 6v44z" fill="#7d7d7d"/><circle cx="38" cy="11" r="5.500" stroke="#e0e0e0" stroke-width="2.400" fill="none"/><path d="M34 15.500L24.500 25" stroke="#e0e0e0" stroke-width="3" fill="none"/></svg><span class="t" style="left:234.22px;top:1429.53px;font:400 19px/22.8px 'DejaVu Sans',sans-serif;color:#b4b4b4;letter-spacing:-1.003px;">-40 ns</span><span class="t" style="left:490.54px;top:1429.53px;font:400 19px/22.8px 'DejaVu Sans',sans-serif;color:#b4b4b4;letter-spacing:-1.003px;">-30 ns</span><span class="t" style="left:746.86px;top:1429.53px;font:400 19px/22.8px 'DejaVu Sans',sans-serif;color:#b4b4b4;letter-spacing:-1.003px;">-20 ns</span><span class="t" style="left:1003.18px;top:1429.53px;font:400 19px/22.8px 'DejaVu Sans',sans-serif;color:#b4b4b4;letter-spacing:-1.003px;">-10 ns</span><span class="t" style="left:1274.00px;top:1429.53px;font:400 19px/22.8px 'DejaVu Sans',sans-serif;color:#b4b4b4;letter-spacing:-1.343px;">0 s</span><span class="t" style="left:1519.32px;top:1429.53px;font:400 19px/22.8px 'DejaVu Sans',sans-serif;color:#b4b4b4;letter-spacing:-1.232px;">10 ns</span><span class="t" style="left:1775.64px;top:1429.53px;font:400 19px/22.8px 'DejaVu Sans',sans-serif;color:#b4b4b4;letter-spacing:-1.232px;">20 ns</span><span class="t" style="left:2031.96px;top:1429.53px;font:400 19px/22.8px 'DejaVu Sans',sans-serif;color:#b4b4b4;letter-spacing:-1.232px;">30 ns</span><span class="t" style="left:2288.28px;top:1429.53px;font:400 19px/22.8px 'DejaVu Sans',sans-serif;color:#b4b4b4;letter-spacing:-1.232px;">40 ns</span><svg style="left:860.400px;top:54px" width="852" height="25" viewBox="0 0 852 25"><path d="M11 1H1v23h10M841 1h10v23h-10" stroke="#dcdcdc" stroke-width="2" fill="none"/><path d="M1 12.500h850" stroke="#cfcfcf" stroke-width="2.600"/></svg><svg style="left:1270.40px;top:84.50px" width="32" height="56" viewBox="0 0 32 56"><path d="M0.2 0h31.6L16 14.6z" fill="#f58c1f"/><path d="M2.300 17.300h27.400v27H20.600L16 53l-4.600-8.700H2.300z" fill="#000" stroke="#f58c1f" stroke-width="3" stroke-linejoin="miter"/></svg><span class="t" style="left:1279.24px;top:104.13px;font:700 21px/25.2px 'DejaVu Sans',sans-serif;color:#f58c1f;">T</span><svg style="left:1273.40px;top:48.60px" width="26" height="36" viewBox="0 0 26 36"><path d="M0.500 0h25L13 7.600z" fill="#f58c1f"/><path d="M4.200 11.200h17.600v16.400H16L13 33l-3-5.400H4.200z" fill="#000" stroke="#f58c1f" stroke-width="2.400"/></svg><span class="t" style="left:1281.80px;top:60.63px;font:700 13.5px/16.2px 'DejaVu Sans',sans-serif;color:#f58c1f;">T</span><svg style="left:9px;top:751.0px" width="53" height="38" viewBox="0 0 53 38"><path d="M5 0h34l14 19-14 19H5a5 5 0 0 1-5-5V5a5 5 0 0 1 5-5z" fill="#8fd12f"/></svg><span class="t" style="left:15.50px;top:759.84px;font:700 17.5px/21.0px 'Liberation Sans',sans-serif;color:#24420c;letter-spacing:0.922px;">C 4</span><span class="t" style="left:2530.28px;top:758.08px;font:400 20px/24.0px 'DejaVu Sans',sans-serif;color:#88bb3b;">0</span><svg style="left:2537.400px;top:754.0px" width="28" height="32" viewBox="0 0 28 32"><path d="M0 16L18 0.500v12h10v7H18v12z" fill="#e8466a"/></svg><div class="b" style="left:2593.60px;top:43.40px;width:221.40px;height:1417.00px;background:#2e2e2e;border-left:2px solid #4b4b4b;border-top:1.600px solid #4b4b4b;border-bottom:1.600px solid #4b4b4b;"></div><span class="t" style="left:2642.80px;top:43.69px;font:700 22.3px/26.76px 'Liberation Sans',sans-serif;color:#fff;letter-spacing:1.124px;">Add New...</span><div class="b" style="left:2607.00px;top:80.70px;width:91.50px;height:52.50px;background:#252525;border-radius:9px;border:1.5px solid #5a5a5a;box-shadow:inset 0 -3px 4px rgba(0,0,0,.35);"></div><span class="t" style="left:2615.95px;top:94.55px;font:400 20.5px/24.6px 'Liberation Sans',sans-serif;color:#fff;letter-spacing:0.262px;-webkit-text-stroke:0.55px #fff;">Cursors</span><div class="b" style="left:2712.70px;top:80.70px;width:91.50px;height:52.50px;background:#252525;border-radius:9px;border:1.5px solid #5a5a5a;box-shadow:inset 0 -3px 4px rgba(0,0,0,.35);"></div><span class="t" style="left:2721.65px;top:94.55px;font:400 20.5px/24.6px 'Liberation Sans',sans-serif;color:#fff;letter-spacing:1.398px;-webkit-text-stroke:0.55px #fff;">Callout</span><div class="b" style="left:2607.00px;top:148.00px;width:91.50px;height:52.50px;background:#252525;border-radius:9px;border:1.5px solid #5a5a5a;box-shadow:inset 0 -3px 4px rgba(0,0,0,.35);"></div><span class="t" style="left:2609.55px;top:161.85px;font:400 20.5px/24.6px 'Liberation Sans',sans-serif;color:#fff;letter-spacing:0.949px;-webkit-text-stroke:0.55px #fff;">Measure</span><div class="b" style="left:2712.70px;top:148.00px;width:91.50px;height:52.50px;background:#252525;border-radius:9px;border:1.5px solid #5a5a5a;box-shadow:inset 0 -3px 4px rgba(0,0,0,.35);"></div><span class="t" style="left:2724.70px;top:161.85px;font:400 20.5px/24.6px 'Liberation Sans',sans-serif;color:#fff;letter-spacing:0.424px;-webkit-text-stroke:0.55px #fff;">Search</span><div class="b" style="left:2607.00px;top:215.50px;width:91.50px;height:52.50px;background:#252525;border-radius:9px;border:1.5px solid #5a5a5a;box-shadow:inset 0 -3px 4px rgba(0,0,0,.35);"></div><span class="t" style="left:2617.75px;top:217.85px;font:400 20.5px/24.6px 'Liberation Sans',sans-serif;color:#fff;letter-spacing:0.235px;-webkit-text-stroke:0.55px #fff;">Results</span><span class="t" style="left:2626.10px;top:240.85px;font:400 20.5px/24.6px 'Liberation Sans',sans-serif;color:#fff;letter-spacing:0.858px;-webkit-text-stroke:0.55px #fff;">Table</span><div class="b" style="left:2712.70px;top:215.50px;width:91.50px;height:52.50px;background:#252525;border-radius:9px;border:1.5px solid #5a5a5a;box-shadow:inset 0 -3px 4px rgba(0,0,0,.35);"></div><span class="t" style="left:2737.95px;top:229.35px;font:400 20.5px/24.6px 'Liberation Sans',sans-serif;color:#fff;letter-spacing:1.418px;-webkit-text-stroke:0.55px #fff;">Plot</span><div class="b" style="left:2600.00px;top:277.20px;width:210.00px;height:1.50px;background:#4d4d4d;"></div><div class="b" style="left:2607.00px;top:288.00px;width:91.50px;height:52.50px;background:#252525;border-radius:9px;border:1.5px solid #5a5a5a;box-shadow:inset 0 -3px 4px rgba(0,0,0,.35);"></div><svg style="left:2633.0px;top:295.0px" width="42" height="40" viewBox="0 0 42 40"><rect x="2" y="2" width="32" height="28" fill="none" stroke="#e8e8e8" stroke-width="3" stroke-dasharray="5 4"/><circle cx="21" cy="13" r="6.500" fill="none" stroke="#e8e8e8" stroke-width="2.600"/><path d="M16.500 18L10 25" stroke="#e8e8e8" stroke-width="3.200"/><path d="M27 20v15.500l3.800-3.600 2.800 6 2.800-1.300-2.800-5.900 5.200-.400z" fill="#e8e8e8"/></svg><div class="b" style="left:2712.70px;top:288.00px;width:91.50px;height:52.50px;background:#252525;border-radius:9px;border:1.5px solid #5a5a5a;box-shadow:inset 0 -3px 4px rgba(0,0,0,.35);"></div><span class="t" style="left:2721.30px;top:301.85px;font:400 20.5px/24.6px 'Liberation Sans',sans-serif;color:#fff;letter-spacing:1.501px;-webkit-text-stroke:0.55px #fff;">More...</span><div class="b" style="left:2600.00px;top:353.00px;width:210.00px;height:1.50px;background:#4d4d4d;"></div><div class="b" style="left:2599.70px;top:374.70px;width:210.80px;height:197.00px;background:#cbcbcb;border-radius:6.500px;overflow:hidden;box-shadow:0 0 0 1px #3d3d3d;"><div class="b" style="left:0.00px;top:0.00px;width:210.80px;height:27.00px;background:#000;"></div></div><span class="t" style="left:2607.20px;top:376.00px;font:400 20.5px/24.6px 'Liberation Sans',sans-serif;color:#fff;letter-spacing:0.462px;-webkit-text-stroke:0.55px #fff;-webkit-text-stroke-width:0.7px;">Meas 1</span><div class="b" style="left:2769.50px;top:380.20px;width:33.00px;height:16.50px;background:#e8466a;border-radius:6px;box-shadow:0 0 0 1px rgba(0,0,0,.35);"></div><span class="t" style="left:2781.83px;top:379.80px;font:700 15px/18.0px 'Liberation Sans',sans-serif;color:#fff;">3</span><span class="t" style="left:2607.00px;top:405.30px;font:400 20.5px/24.6px 'Liberation Sans',sans-serif;color:#1c1c1c;letter-spacing:0.509px;">Maximum</span><span class="t" style="left:2607.00px;top:433.70px;font:400 20.5px/24.6px 'Liberation Sans',sans-serif;color:#1c1c1c;letter-spacing:0.636px;">µ': 268.1 mV</span><span class="t" style="left:2607.00px;top:463.70px;font:400 20.5px/24.6px 'Liberation Sans',sans-serif;color:#1c1c1c;letter-spacing:0.552px;">σ': 0.000 V (N'=1)</span><span class="t" style="left:2607.00px;top:491.30px;font:400 20.5px/24.6px 'Liberation Sans',sans-serif;color:#1c1c1c;letter-spacing:0.662px;">M: 268.8 mV</span><span class="t" style="left:2607.00px;top:519.00px;font:400 20.5px/24.6px 'Liberation Sans',sans-serif;color:#1c1c1c;letter-spacing:0.526px;">m: 267.2 mV</span><span class="t" style="left:2607.00px;top:546.70px;font:400 20.5px/24.6px 'Liberation Sans',sans-serif;color:#1c1c1c;letter-spacing:0.386px;">N: 2859</span><div class="b" style="left:2606.70px;top:486.90px;width:193.00px;height:1.00px;background:#8f8f8f;"></div><div class="b" style="left:2599.70px;top:584.80px;width:210.80px;height:197.00px;background:#cbcbcb;border-radius:6.500px;overflow:hidden;box-shadow:0 0 0 1px #3d3d3d;"><div class="b" style="left:0.00px;top:0.00px;width:210.80px;height:27.00px;background:#59595b;"></div></div><span class="t" style="left:2607.20px;top:586.10px;font:400 20.5px/24.6px 'Liberation Sans',sans-serif;color:#fff;letter-spacing:0.462px;-webkit-text-stroke:0.55px #fff;-webkit-text-stroke-width:0.7px;">Meas 2</span><div class="b" style="left:2769.50px;top:590.30px;width:33.00px;height:16.50px;background:#e8466a;border-radius:6px;box-shadow:0 0 0 1px rgba(0,0,0,.35);"></div><span class="t" style="left:2781.83px;top:589.90px;font:700 15px/18.0px 'Liberation Sans',sans-serif;color:#fff;">3</span><span class="t" style="left:2607.00px;top:615.40px;font:400 20.5px/24.6px 'Liberation Sans',sans-serif;color:#1c1c1c;letter-spacing:0.908px;">Minimum</span><span class="t" style="left:2607.00px;top:643.80px;font:400 20.5px/24.6px 'Liberation Sans',sans-serif;color:#1c1c1c;letter-spacing:0.601px;">µ': -272.0 mV</span><span class="t" style="left:2607.00px;top:673.80px;font:400 20.5px/24.6px 'Liberation Sans',sans-serif;color:#1c1c1c;letter-spacing:0.552px;">σ': 0.000 V (N'=1)</span><span class="t" style="left:2607.00px;top:701.40px;font:400 20.5px/24.6px 'Liberation Sans',sans-serif;color:#1c1c1c;letter-spacing:0.663px;">M: -270.9 mV</span><span class="t" style="left:2607.00px;top:729.10px;font:400 20.5px/24.6px 'Liberation Sans',sans-serif;color:#1c1c1c;letter-spacing:0.538px;">m: -272.9 mV</span><span class="t" style="left:2607.00px;top:756.80px;font:400 20.5px/24.6px 'Liberation Sans',sans-serif;color:#1c1c1c;letter-spacing:0.475px;">N: 32720</span><div class="b" style="left:2606.70px;top:697.00px;width:193.00px;height:1.00px;background:#8f8f8f;"></div><div class="b" style="left:2599.70px;top:794.30px;width:210.80px;height:197.00px;background:#cbcbcb;border-radius:6.500px;overflow:hidden;box-shadow:0 0 0 1px #3d3d3d;"><div class="b" style="left:0.00px;top:0.00px;width:210.80px;height:27.00px;background:#59595b;"></div></div><span class="t" style="left:2607.20px;top:795.60px;font:400 20.5px/24.6px 'Liberation Sans',sans-serif;color:#fff;letter-spacing:0.462px;-webkit-text-stroke:0.55px #fff;-webkit-text-stroke-width:0.7px;">Meas 3</span><div class="b" style="left:2769.50px;top:799.80px;width:33.00px;height:16.50px;background:#e8466a;border-radius:6px;box-shadow:0 0 0 1px rgba(0,0,0,.35);"></div><span class="t" style="left:2781.83px;top:799.40px;font:700 15px/18.0px 'Liberation Sans',sans-serif;color:#fff;">3</span><span class="t" style="left:2607.00px;top:824.90px;font:400 20.5px/24.6px 'Liberation Sans',sans-serif;color:#1c1c1c;letter-spacing:-0.317px;">Frequency</span><span class="t" style="left:2607.00px;top:853.30px;font:400 20.5px/24.6px 'Liberation Sans',sans-serif;color:#1c1c1c;letter-spacing:0.635px;">µ': 45.00 MHz</span><span class="t" style="left:2607.00px;top:883.30px;font:400 20.5px/24.6px 'Liberation Sans',sans-serif;color:#1c1c1c;letter-spacing:0.596px;">σ': 13.02 kHz</span><span class="t" style="left:2607.00px;top:910.90px;font:400 20.5px/24.6px 'Liberation Sans',sans-serif;color:#1c1c1c;letter-spacing:0.700px;">M: 45.05 MHz</span><span class="t" style="left:2607.00px;top:938.60px;font:400 20.5px/24.6px 'Liberation Sans',sans-serif;color:#1c1c1c;letter-spacing:0.575px;">m: 44.94 MHz</span><span class="t" style="left:2607.00px;top:966.30px;font:400 20.5px/24.6px 'Liberation Sans',sans-serif;color:#1c1c1c;letter-spacing:0.488px;">N: 130876</span><div class="b" style="left:2606.70px;top:906.50px;width:193.00px;height:1.00px;background:#8f8f8f;"></div><div class="b" style="left:2599.70px;top:1004.00px;width:210.80px;height:197.00px;background:#cbcbcb;border-radius:6.500px;overflow:hidden;box-shadow:0 0 0 1px #3d3d3d;"><div class="b" style="left:0.00px;top:0.00px;width:210.80px;height:27.00px;background:#59595b;"></div></div><span class="t" style="left:2607.20px;top:1005.30px;font:400 20.5px/24.6px 'Liberation Sans',sans-serif;color:#fff;letter-spacing:0.462px;-webkit-text-stroke:0.55px #fff;-webkit-text-stroke-width:0.7px;">Meas 4</span><div class="b" style="left:2769.50px;top:1009.50px;width:33.00px;height:16.50px;background:#8fd12f;border-radius:6px;box-shadow:0 0 0 1px rgba(0,0,0,.35);"></div><span class="t" style="left:2781.83px;top:1009.10px;font:700 15px/18.0px 'Liberation Sans',sans-serif;color:#1f3d0a;">4</span><span class="t" style="left:2607.00px;top:1034.60px;font:400 20.5px/24.6px 'Liberation Sans',sans-serif;color:#1c1c1c;letter-spacing:-0.317px;">Frequency</span><span class="t" style="left:2607.00px;top:1063.00px;font:400 20.5px/24.6px 'Liberation Sans',sans-serif;color:#1c1c1c;letter-spacing:0.635px;">µ': 45.00 MHz</span><span class="t" style="left:2607.00px;top:1093.00px;font:400 20.5px/24.6px 'Liberation Sans',sans-serif;color:#1c1c1c;letter-spacing:0.596px;">σ': 5.043 kHz</span><span class="t" style="left:2607.00px;top:1120.60px;font:400 20.5px/24.6px 'Liberation Sans',sans-serif;color:#1c1c1c;letter-spacing:0.700px;">M: 45.06 MHz</span><span class="t" style="left:2607.00px;top:1148.30px;font:400 20.5px/24.6px 'Liberation Sans',sans-serif;color:#1c1c1c;letter-spacing:0.575px;">m: 44.94 MHz</span><span class="t" style="left:2607.00px;top:1176.00px;font:400 20.5px/24.6px 'Liberation Sans',sans-serif;color:#1c1c1c;letter-spacing:0.488px;">N: 128667</span><div class="b" style="left:2606.70px;top:1116.20px;width:193.00px;height:1.00px;background:#8f8f8f;"></div><div class="b" style="left:4.10px;top:1470.20px;width:132.70px;height:111.60px;background:#cbcbcb;border-radius:6.500px;overflow:hidden;box-shadow:0 0 0 1px #3d3d3d;"><div class="b" style="left:0.00px;top:0.00px;width:132.70px;height:28.20px;background:#4b222a;"></div></div><span class="t" style="left:11.60px;top:1472.70px;font:400 20.5px/24.6px 'Liberation Sans',sans-serif;color:#ffe9ea;letter-spacing:0.074px;-webkit-text-stroke:0.55px #ffe9ea;-webkit-text-stroke-width:0.7px;">Ch 3</span><div class="b" style="left:143.80px;top:1470.20px;width:131.70px;height:111.60px;background:#cbcbcb;border-radius:6.500px;overflow:hidden;box-shadow:0 0 0 1px #3d3d3d;"><div class="b" style="left:0.00px;top:0.00px;width:131.70px;height:28.20px;background:#8ccb2f;"></div></div><span class="t" style="left:151.30px;top:1472.70px;font:400 20.5px/24.6px 'Liberation Sans',sans-serif;color:#0c2a00;letter-spacing:0.074px;-webkit-text-stroke:0.55px #0c2a00;-webkit-text-stroke-width:0.7px;">Ch 4</span><span class="t" style="left:11.60px;top:1501.40px;font:400 20.5px/24.6px 'Liberation Sans',sans-serif;color:#1c1c1c;letter-spacing:0.315px;">100 mV/div</span><span class="t" style="left:11.60px;top:1529.10px;font:400 20.5px/24.6px 'Liberation Sans',sans-serif;color:#1c1c1c;letter-spacing:0.500px;">1 MΩ</span><span class="t" style="left:11.60px;top:1556.60px;font:400 20.5px/24.6px 'Liberation Sans',sans-serif;color:#1c1c1c;letter-spacing:0.453px;">500 MHz</span><span class="t" style="left:107.60px;top:1557.62px;font:700 11.5px/13.8px 'Liberation Sans',sans-serif;color:#1c1c1c;">B</span><span class="t" style="left:115.60px;top:1561.12px;font:700 11.5px/13.8px 'Liberation Sans',sans-serif;color:#1c1c1c;">w</span><span class="t" style="left:151.30px;top:1501.40px;font:400 20.5px/24.6px 'Liberation Sans',sans-serif;color:#1c1c1c;letter-spacing:0.118px;">1 V/div</span><span class="t" style="left:151.30px;top:1529.10px;font:400 20.5px/24.6px 'Liberation Sans',sans-serif;color:#1c1c1c;letter-spacing:0.500px;">1 MΩ</span><span class="t" style="left:151.30px;top:1556.60px;font:400 20.5px/24.6px 'Liberation Sans',sans-serif;color:#1c1c1c;letter-spacing:0.453px;">500 MHz</span><span class="t" style="left:247.30px;top:1557.62px;font:700 11.5px/13.8px 'Liberation Sans',sans-serif;color:#1c1c1c;">B</span><span class="t" style="left:255.30px;top:1561.12px;font:700 11.5px/13.8px 'Liberation Sans',sans-serif;color:#1c1c1c;">w</span><div class="b" style="left:1213.00px;top:1464.60px;width:56.80px;height:116.40px;background:#2b2b2b;border-radius:9px;border:2px solid #625e5c;box-shadow:inset 0 -5px 5px rgba(0,0,0,.28);"></div><div class="b" style="left:1220.00px;top:1477.40px;width:42.80px;height:2.60px;background:#e9e157;border-radius:1.300px;"></div><span class="t" style="left:1233.33px;top:1512.15px;font:400 29px/34.8px 'Liberation Sans',sans-serif;color:#e6e6e6;">1</span><div class="b" style="left:1278.70px;top:1464.60px;width:58.00px;height:116.40px;background:#2b2b2b;border-radius:9px;border:2px solid #625e5c;box-shadow:inset 0 -5px 5px rgba(0,0,0,.28);"></div><div class="b" style="left:1285.70px;top:1477.40px;width:44.00px;height:2.60px;background:#45c4d2;border-radius:1.300px;"></div><span class="t" style="left:1299.63px;top:1512.15px;font:400 29px/34.8px 'Liberation Sans',sans-serif;color:#e6e6e6;">2</span><div class="b" style="left:1352.70px;top:1468.00px;width:1.60px;height:112.00px;background:#4f4f4f;"></div><div class="b" style="left:1573.80px;top:1468.00px;width:1.60px;height:112.00px;background:#4f4f4f;"></div><div class="b" style="left:1663.70px;top:1468.00px;width:1.60px;height:112.00px;background:#4f4f4f;"></div><div class="b" style="left:2655.00px;top:1468.00px;width:1.60px;height:112.00px;background:#4f4f4f;"></div><div class="b" style="left:1368.60px;top:1464.60px;width:56.60px;height:116.40px;background:#2b2b2b;border-radius:9px;border:2px solid #625e5c;box-shadow:inset 0 -5px 5px rgba(0,0,0,.28);"></div><div class="b" style="left:1375.60px;top:1477.40px;width:42.60px;height:2.60px;background:#f08a2c;border-radius:1.300px;"></div><span class="t" style="left:1378.22px;top:1493.52px;font:400 21px/25.2px 'Liberation Sans',sans-serif;color:#e6e6e6;">Add</span><span class="t" style="left:1375.89px;top:1517.72px;font:400 21px/25.2px 'Liberation Sans',sans-serif;color:#e6e6e6;">New</span><span class="t" style="left:1373.56px;top:1541.52px;font:400 21px/25.2px 'Liberation Sans',sans-serif;color:#e6e6e6;">Math</span><div class="b" style="left:1434.20px;top:1464.60px;width:57.40px;height:116.40px;background:#2b2b2b;border-radius:9px;border:2px solid #625e5c;box-shadow:inset 0 -5px 5px rgba(0,0,0,.28);"></div><div class="b" style="left:1441.20px;top:1477.40px;width:43.40px;height:2.60px;background:#b8b4cf;border-radius:1.300px;"></div><span class="t" style="left:1444.22px;top:1493.52px;font:400 21px/25.2px 'Liberation Sans',sans-serif;color:#e6e6e6;">Add</span><span class="t" style="left:1441.89px;top:1517.72px;font:400 21px/25.2px 'Liberation Sans',sans-serif;color:#e6e6e6;">New</span><span class="t" style="left:1446.56px;top:1541.52px;font:400 21px/25.2px 'Liberation Sans',sans-serif;color:#e6e6e6;">Ref</span><div class="b" style="left:1499.90px;top:1464.60px;width:58.10px;height:116.40px;background:#2b2b2b;border-radius:9px;border:2px solid #625e5c;box-shadow:inset 0 -5px 5px rgba(0,0,0,.28);"></div><div class="b" style="left:1506.90px;top:1477.40px;width:44.10px;height:2.60px;background:#b44de0;border-radius:1.300px;"></div><span class="t" style="left:1510.27px;top:1493.52px;font:400 21px/25.2px 'Liberation Sans',sans-serif;color:#e6e6e6;">Add</span><span class="t" style="left:1507.94px;top:1517.72px;font:400 21px/25.2px 'Liberation Sans',sans-serif;color:#e6e6e6;">New</span><span class="t" style="left:1510.86px;top:1541.52px;font:400 21px/25.2px 'Liberation Sans',sans-serif;color:#e6e6e6;">Bus</span><div class="b" style="left:1589.70px;top:1464.60px;width:58.10px;height:116.40px;background:#2b2b2b;border-radius:9px;border:2px solid #625e5c;box-shadow:inset 0 -5px 5px rgba(0,0,0,.28);"></div><div class="b" style="left:1596.70px;top:1477.40px;width:44.10px;height:2.60px;background:#4a4a4a;border-radius:1.300px;"></div><span class="t" style="left:1595.42px;top:1517.92px;font:400 21px/25.2px 'Liberation Sans',sans-serif;color:#e6e6e6;">DVM</span><div class="b" style="left:1679.60px;top:1471.90px;width:187.90px;height:109.10px;background:#cbcbcb;border-radius:6.500px;overflow:hidden;box-shadow:0 0 0 1px #3d3d3d;"><div class="b" style="left:0.00px;top:0.00px;width:187.90px;height:27.60px;background:#59595b;"></div></div><span class="t" style="left:1687.10px;top:1473.80px;font:400 20.5px/24.6px 'Liberation Sans',sans-serif;color:#fff;letter-spacing:0.237px;-webkit-text-stroke:0.55px #fff;-webkit-text-stroke-width:0.7px;">AFG: Sine</span><span class="t" style="left:1686.10px;top:1500.60px;font:400 20.5px/24.6px 'Liberation Sans',sans-serif;color:#1c1c1c;letter-spacing:0.152px;">Freq: 45 MHz</span><span class="t" style="left:1686.10px;top:1528.30px;font:400 20.5px/24.6px 'Liberation Sans',sans-serif;color:#1c1c1c;letter-spacing:0.654px;">Amp: 500 mVpp</span><span class="t" style="left:1686.10px;top:1555.80px;font:400 20.5px/24.6px 'Liberation Sans',sans-serif;color:#1c1c1c;letter-spacing:0.366px;">Offset: 0 V</span><div class="b" style="left:1878.00px;top:1471.90px;width:290.90px;height:109.10px;background:#cbcbcb;border-radius:6.500px;overflow:hidden;box-shadow:0 0 0 1px #3d3d3d;"><div class="b" style="left:0.00px;top:0.00px;width:290.90px;height:27.60px;background:#59595b;"></div></div><span class="t" style="left:1885.50px;top:1473.80px;font:400 20.5px/24.6px 'Liberation Sans',sans-serif;color:#fff;letter-spacing:1.471px;-webkit-text-stroke:0.55px #fff;-webkit-text-stroke-width:0.7px;">Horizontal</span><span class="t" style="left:1884.50px;top:1500.60px;font:400 20.5px/24.6px 'Liberation Sans',sans-serif;color:#1c1c1c;letter-spacing:0.161px;">10 ns/div</span><span class="t" style="left:1884.50px;top:1528.30px;font:400 20.5px/24.6px 'Liberation Sans',sans-serif;color:#1c1c1c;letter-spacing:-0.630px;">SR: 25 GS/s</span><span class="t" style="left:1884.50px;top:1555.80px;font:400 20.5px/24.6px 'Liberation Sans',sans-serif;color:#1c1c1c;letter-spacing:-0.074px;">RL: 2.5 kpts</span><span class="t" style="left:2040.30px;top:1500.60px;font:400 20.5px/24.6px 'Liberation Sans',sans-serif;color:#1c1c1c;letter-spacing:0.075px;">100 ns</span><span class="t" style="left:2040.30px;top:1528.30px;font:400 20.5px/24.6px 'Liberation Sans',sans-serif;color:#1c1c1c;letter-spacing:0.445px;">40 ps/pt</span><span class="t" style="left:2061.50px;top:1555.80px;font:400 20.5px/24.6px 'Liberation Sans',sans-serif;color:#1c1c1c;letter-spacing:0.823px;">50%</span><svg style="left:2041.5px;top:1559.500px" width="11" height="16" viewBox="0 0 11 16"><path d="M0 0h11v10.500L5.500 16 0 10.500z" fill="#e8851c"/></svg><span class="t" style="left:2043.76px;top:1561.51px;font:700 9.5px/11.4px 'DejaVu Sans',sans-serif;color:#111;">T</span><div class="b" style="left:2178.50px;top:1471.90px;width:231.80px;height:109.10px;background:#cbcbcb;border-radius:6.500px;overflow:hidden;box-shadow:0 0 0 1px #3d3d3d;"><div class="b" style="left:0.00px;top:0.00px;width:231.80px;height:27.60px;background:#59595b;"></div></div><span class="t" style="left:2186.00px;top:1473.80px;font:400 20.5px/24.6px 'Liberation Sans',sans-serif;color:#fff;letter-spacing:0.975px;-webkit-text-stroke:0.55px #fff;-webkit-text-stroke-width:0.7px;">Trigger</span><div class="b" style="left:2185.60px;top:1504.20px;width:42.40px;height:21.20px;background:#e8466a;border-radius:7px;border:1.500px solid #7a1c30;"></div><span class="t" style="left:2201.24px;top:1502.87px;font:400 20px/24.0px 'Liberation Sans',sans-serif;color:#fff;">3</span><svg style="left:2242.5px;top:1504.500px" width="26" height="20" viewBox="0 0 26 20"><path d="M1 18.500h6L18 1.500h7" stroke="#4a4496" stroke-width="1.700" fill="none"/></svg><span class="t" style="left:2280.80px;top:1500.60px;font:400 20.5px/24.6px 'Liberation Sans',sans-serif;color:#1c1c1c;letter-spacing:0.243px;">0 V</span><div class="b" style="left:2420.60px;top:1471.90px;width:217.60px;height:109.10px;background:#cbcbcb;border-radius:6.500px;overflow:hidden;box-shadow:0 0 0 1px #3d3d3d;"><div class="b" style="left:0.00px;top:0.00px;width:217.60px;height:27.60px;background:#59595b;"></div></div><span class="t" style="left:2428.10px;top:1473.80px;font:400 20.5px/24.6px 'Liberation Sans',sans-serif;color:#fff;letter-spacing:1.351px;-webkit-text-stroke:0.55px #fff;-webkit-text-stroke-width:0.7px;">Acquisition</span><span class="t" style="left:2427.10px;top:1500.60px;font:400 20.5px/24.6px 'Liberation Sans',sans-serif;color:#1c1c1c;letter-spacing:0.527px;">Auto,</span><span class="t" style="left:2427.10px;top:1528.30px;font:400 20.5px/24.6px 'Liberation Sans',sans-serif;color:#1c1c1c;letter-spacing:0.211px;">Average: 16</span><span class="t" style="left:2427.10px;top:1555.80px;font:400 20.5px/24.6px 'Liberation Sans',sans-serif;color:#1c1c1c;letter-spacing:0.532px;">1.210 MAcqs</span><span class="t" style="left:2545.50px;top:1500.60px;font:400 20.5px/24.6px 'Liberation Sans',sans-serif;color:#1c1c1c;letter-spacing:-0.062px;">Analyze</span><div class="b" style="left:2672.50px;top:1466.00px;width:130.50px;height:51.20px;background:#1cc21e;border-radius:8px;border:2.500px solid #45d948;"></div><span class="t" style="left:2691.20px;top:1479.64px;font:700 17.5px/21.0px 'DejaVu Sans',sans-serif;color:#fff;letter-spacing:-0.177px;">Triggered</span><div class="b" style="left:2671.40px;top:1526.00px;width:131.60px;height:55.40px;background:#cbcbcb;border-radius:7px;"></div><span class="t" style="left:2675.95px;top:1527.00px;font:400 20.5px/24.6px 'Liberation Sans',sans-serif;color:#1c1c1c;letter-spacing:0.669px;">19 Aug 2024</span><span class="t" style="left:2683.20px;top:1553.10px;font:400 20.5px/24.6px 'Liberation Sans',sans-serif;color:#1c1c1c;letter-spacing:0.316px;">9:14:37 PM</span><div class="b" style="left:2579.80px;top:736.00px;width:6.40px;height:6.40px;background:#d0d0d0;border-radius:2.5px;"></div><div class="b" style="left:2579.80px;top:748.60px;width:6.40px;height:6.40px;background:#d0d0d0;border-radius:2.5px;"></div><div class="b" style="left:2579.80px;top:761.10px;width:6.40px;height:6.40px;background:#d0d0d0;border-radius:2.5px;"></div></div><svg style="left:0;top:0" width="3166" height="1911"><path d="M2781.0 554.3C2795.4 553.6 2854.6 550.1 2884.0 549.3C2913.4 548.5 2969.6 546.9 2991.0 548.3C3012.4 549.7 3026.5 553.3 3037.0 559.3C3047.5 565.3 3058.0 579.4 3066.0 591.3C3074.0 603.2 3088.5 628.9 3094.0 644.3C3099.5 659.7 3104.4 683.8 3105.0 701.3C3105.6 718.8 3102.1 744.9 3098.0 769.3C3093.9 793.7 3083.6 850.9 3076.0 875.8C3068.4 900.7 3053.9 927.8 3044.0 946.9C3034.1 966.0 3020.4 1000.1 3005.0 1012.3C2989.6 1024.5 2955.8 1033.7 2934.0 1034.3C2912.2 1034.9 2873.9 1023.0 2849.0 1016.3C2824.1 1009.6 2771.5 995.3 2756.0 986.3C2740.5 977.3 2744.4 965.3 2738.0 952.3C2731.6 939.3 2715.7 914.0 2710.0 893.3C2704.3 872.6 2700.9 828.7 2697.0 804.3C2693.1 779.9 2684.4 741.7 2682.0 719.3C2679.6 696.9 2679.2 661.5 2680.0 644.3C2680.8 627.1 2679.3 606.2 2688.0 596.3C2696.7 586.4 2724.5 578.5 2742.0 573.3C2759.5 568.1 2803.1 561.3 2813.0 559.3" stroke="#a50c10" stroke-width="12.2" fill="none" stroke-linecap="round" stroke-linejoin="round"/></svg></div>
<span class="t" style="left:17.00px;top:2498.75px;font:400 75px/90.0px 'DejaVu Sans',sans-serif;color:#a90a0a;letter-spacing:2.311px;-webkit-text-stroke:0.45px #a90a0a;">Test 2:</span><span class="t" style="left:17.00px;top:2589.45px;font:400 75px/90.0px 'DejaVu Sans',sans-serif;color:#a90a0a;letter-spacing:0.869px;-webkit-text-stroke:0.45px #a90a0a;">Reset scope and set up same test - now Maximum and Minimum Values are OK</span>
<div class="b" style="left:0;top:4582px;width:3166px;height:40px;background:#fff"></div>
<div class="ss" style="top:2711.5px;height:1910.5px;border-radius:20px 20px 20px 20px;background:#000"><div class="sc" style="left:0;top:0;transform:scale(2);width:1583px;height:121px"><div class="b" style="left:0.00px;top:0.00px;width:1583.00px;height:56.00px;background:#fcd9c8;"></div><div class="b" style="left:0.00px;top:40.00px;width:1583.00px;height:81.00px;background:#fff;border-radius:9px 9px 0 0;"></div><div class="b" style="left:20.90px;top:14.50px;width:12.00px;height:12.00px;background:#e4d1ca;border-radius:50%;border:0.5px solid #d2beb6;"></div><div class="b" style="left:40.90px;top:14.50px;width:12.00px;height:12.00px;background:#e4d1ca;border-radius:50%;border:0.5px solid #d2beb6;"></div><div class="b" style="left:60.90px;top:14.50px;width:12.00px;height:12.00px;background:#e4d1ca;border-radius:50%;border:0.5px solid #d2beb6;"></div><svg style="left:99.70px;top:12.30px" width="16.2" height="16.2" viewBox="0 0 20 20"><circle cx="10" cy="10" r="10" fill="#2e3d4f"/><path d="M4.2 6.2h6.6v2h-2.3l-1.6 6.4h-2.2l1.6-6.4h-2.6z" fill="#fff"/><path d="M13.6 5.4l-5.2 9.4h1.9l5.2-9.4z" fill="#3ec1d3"/><path d="M11.6 10.6l2.2 4.2h2.3l-2.9-5.4z" fill="#fff"/></svg><span class="t" style="left:124.40px;top:12.70px;font:400 13px/15.6px 'Liberation Sans',sans-serif;color:#3b3330;letter-spacing:-0.110px;">LXI - Tektronix-MSO64B</span><svg style="left:303.50px;top:16px" width="9" height="9" viewBox="0 0 9 9"><path d="M.8.8l7.4 7.4M8.2.8L.8 8.2" stroke="#3b3330" stroke-width="1.5" fill="none"/></svg><div class="b" style="left:329.00px;top:6.00px;width:236.00px;height:35.00px;background:#fff;border-radius:10px 10px 0 0;"></div><svg style="left:320.00px;top:31px" width="9" height="9" viewBox="0 0 9 9"><path d="M9 0v9H0A9 9 0 0 0 9 0z" fill="#fff"/></svg><svg style="left:565.00px;top:31px" width="9" height="9" viewBox="0 0 9 9"><path d="M0 0v9h9A9 9 0 0 1 0 0z" fill="#fff"/></svg><svg style="left:337.60px;top:12.30px" width="16.2" height="16.2" viewBox="0 0 20 20"><circle cx="10" cy="10" r="10" fill="#2e3d4f"/><path d="M4.2 6.2h6.6v2h-2.3l-1.6 6.4h-2.2l1.6-6.4h-2.6z" fill="#fff"/><path d="M13.6 5.4l-5.2 9.4h1.9l5.2-9.4z" fill="#3ec1d3"/><path d="M11.6 10.6l2.2 4.2h2.3l-2.9-5.4z" fill="#fff"/></svg><span class="t" style="left:362.30px;top:12.70px;font:400 13px/15.6px 'Liberation Sans',sans-serif;color:#1f1f1f;letter-spacing:-0.227px;">Tek e*Scope</span><svg style="left:541.20px;top:16px" width="9" height="9" viewBox="0 0 9 9"><path d="M.8.8l7.4 7.4M8.2.8L.8 8.2" stroke="#1f1f1f" stroke-width="1.6" fill="none"/></svg><svg style="left:576.00px;top:14.5px" width="12" height="12" viewBox="0 0 12 12"><path d="M6 .8v10.4M.8 6h10.4" stroke="#6b5e58" stroke-width="1.3" fill="none"/></svg><div class="b" style="left:1548.90px;top:7.00px;width:28.00px;height:27.00px;background:#fff;border-radius:9px;"></div><svg style="left:1558.40px;top:17.5px" width="9" height="6" viewBox="0 0 9 6"><path d="M1 1l3.5 3.5L8 1" stroke="#1f1f1f" stroke-width="1.7" fill="none"/></svg><svg style="left:15.20px;top:56px" width="14" height="14" viewBox="0 0 16 16"><g><path d="M15 8H2M7.6 2.2L1.8 8l5.8 5.8" stroke="#a3a3a3" stroke-width="1.5" fill="none"/></g></svg><svg style="left:50.90px;top:56px" width="14" height="14" viewBox="0 0 16 16"><g transform="translate(16 0) scale(-1 1)"><path d="M15 8H2M7.6 2.2L1.8 8l5.8 5.8" stroke="#a3a3a3" stroke-width="1.5" fill="none"/></g></svg><svg style="left:85.90px;top:55px" width="16" height="16" viewBox="0 0 16 16"><path d="M13.6 8a5.6 5.6 0 1 1-1.7-4" stroke="#8a8a8a" stroke-width="1.5" fill="none"/><path d="M13.9 1.2v4.2H9.7z" fill="#8a8a8a"/></svg><div class="b" style="left:120.00px;top:46.20px;width:1252.00px;height:33.60px;background:#e3e3e6;border-radius:17px;"></div><div class="b" style="left:125.00px;top:51.00px;width:97.00px;height:24.00px;background:#fff;border-radius:12px;"></div><svg style="left:130px;top:56.5px" width="14" height="13" viewBox="0 0 14 13"><path d="M7 1.2L13 12H1z" stroke="#1f1f1f" stroke-width="1.3" fill="none" stroke-linejoin="round"/><path d="M7 5v3.6M7 9.6v1.2" stroke="#1f1f1f" stroke-width="1.2"/></svg><span class="t" style="left:149.80px;top:55.40px;font:400 13px/15.6px 'Liberation Sans',sans-serif;color:#1f1f1f;letter-spacing:-0.183px;-webkit-text-stroke:0.45px #1f1f1f;">Not Secure</span><span class="t" style="left:230.00px;top:54.95px;font:400 14px/16.8px 'Liberation Sans',sans-serif;color:#1f1f1f;letter-spacing:0.082px;">192.168.1.160</span><span class="t" style="left:320.60px;top:54.95px;font:400 14px/16.8px 'Liberation Sans',sans-serif;color:#5f6368;letter-spacing:0.311px;">/Tektronix/#/client/VGVrIGUqU2NvcGUAYwBub2F1dGg=</span><svg style="left:1340.30px;top:54.5px" width="17" height="17" viewBox="0 0 24 24"><path d="M12 2.6l2.9 6.2 6.7.8-5 4.6 1.4 6.7-6-3.4-6 3.4 1.400-6.700-5-4.600 6.700-.800z" stroke="#3c3c3c" stroke-width="2" fill="none" stroke-linejoin="round"/></svg><svg style="left:1389.60px;top:54px" width="18" height="18" viewBox="0 0 18 18"><circle cx="9" cy="9" r="8.3" fill="#dfe9f7" stroke="#6f9ad6" stroke-width="1.4"/><circle cx="9" cy="9" r="5.2" fill="#fff" stroke="#3b66b0" stroke-width="1.3"/><rect x="8" y="5.6" width="2" height="6.8" rx="1" fill="#2c4f91"/></svg><svg style="left:1426.30px;top:54.5px" width="17" height="17" viewBox="0 0 17 17"><circle cx="8.500" cy="8.500" r="8.500" fill="#4bb79a"/><path d="M12.2 5.600A4.600 4.600 0 1 0 13 9.300H9.200" stroke="#fff" stroke-width="1.8" fill="none"/></svg><svg style="left:1462.50px;top:54px" width="18" height="18" viewBox="0 0 18 18"><path d="M3 5.500h3.600a1.900 1.900 0 1 1 3.600 0H13.500v3.300a1.900 1.900 0 1 1 0 3.600V15.500H3z" stroke="#474747" stroke-width="1.5" fill="none" stroke-linejoin="round"/></svg><div class="b" style="left:1497.10px;top:54.00px;width:1.20px;height:18.00px;background:#f6c3ae;"></div><div class="b" style="left:1513.20px;top:54.30px;width:23.00px;height:17.50px;border-radius:9px/8.7px;overflow:hidden;background:linear-gradient(90deg,#4a4e52 0,#7d8387 35%,#5a5f63 60%,#8d9296 80%,#6b7074 100%);"><div class="b" style="left:3.00px;top:3.00px;width:8.00px;height:8.00px;border-radius:50%;background:#9ea3a6;opacity:.7;"></div><div class="b" style="left:12.00px;top:1.50px;width:8.00px;height:10.00px;border-radius:50%;background:#b9bdbf;opacity:.75;"></div><div class="b" style="left:9.00px;top:9.00px;width:7.00px;height:8.00px;background:#3f4346;border-radius:40%;opacity:.8;"></div></div><div class="b" style="left:1559.00px;top:56.00px;width:2.80px;height:2.80px;background:#5f6368;border-radius:50%;"></div><div class="b" style="left:1559.00px;top:61.60px;width:2.80px;height:2.80px;background:#5f6368;border-radius:50%;"></div><div class="b" style="left:1559.00px;top:67.20px;width:2.80px;height:2.80px;background:#5f6368;border-radius:50%;"></div><svg style="left:11.70px;top:92.20px" width="16" height="16" viewBox="0 0 20 20"><circle cx="10" cy="10" r="9.4" fill="#5f6368"/><path d="M3 8.5c2 .2 3 1.2 3.2 2.6 1.6.4 2.6 1.4 2.4 3.2l-1.2 3.4c-2.6-.9-4.6-3.4-4.9-6.4z" fill="#fff"/><path d="M9 2.2c3-.5 6 .9 7.4 3.4-1 .6-2 .6-2.8 1.6-1.4.2-2.2 1.2-2 2.6 1.4 1.4 3.2.6 4 2.2.6 1 .2 2.4-.6 3.2.9-1.2 1.3-2.6 1.3-4.1" fill="none" stroke="#fff" stroke-width="1.6"/><path d="M8.6 2.4c.4 1.6-.4 2.6-2 2.8-.8.8-2 .8-2.6.4 1-1.6 2.6-2.8 4.6-3.2z" fill="#fff"/></svg><span class="t" style="left:34.20px;top:92.30px;font:400 13px/15.6px 'Liberation Sans',sans-serif;color:#6e7175;letter-spacing:-0.378px;">New Tab</span><div class="b" style="left:98.40px;top:94.20px;width:17.00px;height:12.00px;background:#f0615f;border-radius:3.5px;"></div><svg style="left:104.40px;top:97.00px" width="6" height="6.400" viewBox="0 0 6 6.400"><path d="M0 0l6 3.200-6 3.200z" fill="#fff"/></svg><span class="t" style="left:121.10px;top:92.30px;font:400 13px/15.6px 'Liberation Sans',sans-serif;color:#6e7175;letter-spacing:-0.152px;">Ron Fredericks - Y...</span><div class="b" style="left:252.30px;top:91.70px;width:17.00px;height:17.00px;background:linear-gradient(90deg,#6f8fc0 0,#7d9ccb 55%,#9db4d6 100%);overflow:hidden;"><div class="b" style="left:3.20px;top:1.60px;width:9.60px;height:9.40px;border-radius:45% 45% 50% 50%;background:radial-gradient(circle at 50% 40%,#e8c9b8 0,#d5ab98 60%,#b88d7c 100%);"></div><div class="b" style="left:3.40px;top:0.80px;width:9.20px;height:3.60px;background:#a9a39d;border-radius:50% 50% 20% 20%;"></div><div class="b" style="left:0.50px;top:10.60px;width:16.00px;height:7.00px;background:#3c4250;border-radius:50% 50% 0 0;"></div><div class="b" style="left:7.00px;top:10.40px;width:3.00px;height:4.00px;background:#e9e9ec;clip-path:polygon(0 0,100% 0,50% 100%);"></div></div><span class="t" style="left:274.90px;top:92.30px;font:400 13px/15.6px 'Liberation Sans',sans-serif;color:#6e7175;letter-spacing:-0.182px;">Dashboard ‹ Bioph...</span><div class="b" style="left:406.50px;top:91.70px;width:17.00px;height:17.00px;background:linear-gradient(90deg,#6f8fc0 0,#7d9ccb 55%,#9db4d6 100%);overflow:hidden;"><div class="b" style="left:3.20px;top:1.60px;width:9.60px;height:9.40px;border-radius:45% 45% 50% 50%;background:radial-gradient(circle at 50% 40%,#e8c9b8 0,#d5ab98 60%,#b88d7c 100%);"></div><div class="b" style="left:3.40px;top:0.80px;width:9.20px;height:3.60px;background:#a9a39d;border-radius:50% 50% 20% 20%;"></div><div class="b" style="left:0.50px;top:10.60px;width:16.00px;height:7.00px;background:#3c4250;border-radius:50% 50% 0 0;"></div><div class="b" style="left:7.00px;top:10.40px;width:3.00px;height:4.00px;background:#e9e9ec;clip-path:polygon(0 0,100% 0,50% 100%);"></div></div><span class="t" style="left:429.10px;top:92.30px;font:400 13px/15.6px 'Liberation Sans',sans-serif;color:#6e7175;letter-spacing:-0.211px;">Biophysics Lab –...</span><svg style="left:560.80px;top:92.20px" width="16" height="16" viewBox="0 0 20 20"><circle cx="10" cy="10" r="9.4" fill="#5f6368"/><path d="M3 8.5c2 .2 3 1.2 3.2 2.6 1.6.4 2.6 1.4 2.4 3.2l-1.2 3.4c-2.6-.9-4.6-3.4-4.9-6.4z" fill="#fff"/><path d="M9 2.2c3-.5 6 .9 7.4 3.4-1 .6-2 .6-2.8 1.6-1.4.2-2.2 1.2-2 2.6 1.4 1.4 3.2.6 4 2.2.6 1 .2 2.4-.6 3.2.9-1.2 1.3-2.6 1.3-4.1" fill="none" stroke="#fff" stroke-width="1.6"/><path d="M8.6 2.4c.4 1.6-.4 2.6-2 2.8-.8.8-2 .8-2.6.4 1-1.6 2.6-2.8 4.6-3.2z" fill="#fff"/></svg><span class="t" style="left:582.90px;top:92.30px;font:400 13px/15.6px 'Liberation Sans',sans-serif;color:#6e7175;letter-spacing:-0.232px;">Free Online Tools t...</span><svg style="left:714.60px;top:91.70px" width="16" height="17" viewBox="0 0 16 17"><path d="M8 .8l6.600 3.800v7.800L8 16.200 1.400 12.400V4.600z" stroke="#7b7f83" stroke-width="1.2" fill="none"/><path d="M10.600 6.600a3.200 3.200 0 1 0 0 3.800" stroke="#7b7f83" stroke-width="1.500" fill="none"/></svg><span class="t" style="left:736.70px;top:92.30px;font:400 13px/15.6px 'Liberation Sans',sans-serif;color:#6e7175;letter-spacing:-0.430px;">PubChem</span><svg style="left:806.70px;top:91.20px" width="18" height="18" viewBox="0 0 18 18"><circle cx="9" cy="9" r="4.200" stroke="#8fc65a" stroke-width="1.600" fill="none"/><circle cx="9" cy="9" r="1.400" fill="#8fc65a"/><path d="M9 .800v3M9 14.200v3M.800 9h3M14.200 9h3M3.200 3.200l2 2M12.800 12.800l2 2M3.200 14.800l2-2M12.800 5.200l2-2" stroke="#8fc65a" stroke-width="1.500"/></svg><span class="t" style="left:829.70px;top:92.30px;font:400 13px/15.6px 'Liberation Sans',sans-serif;color:#6e7175;letter-spacing:-0.175px;">Chemical search -...</span><svg style="left:961.40px;top:92.20px" width="16" height="16" viewBox="0 0 16 16"><path d="M14.600 8.200H8.200" stroke="#4285f4" stroke-width="2.400" fill="none"/><path d="M13.100 3.700A6.600 6.600 0 0 0 2.300 4.900" stroke="#ea4335" stroke-width="2.400" fill="none"/><path d="M2.300 4.900a6.600 6.600 0 0 0 0 6.400" stroke="#fbbc05" stroke-width="2.400" fill="none"/><path d="M2.300 11.300a6.600 6.600 0 0 0 10.400 1.700" stroke="#34a853" stroke-width="2.400" fill="none"/><path d="M12.700 13a6.600 6.600 0 0 0 1.900-4.800" stroke="#4285f4" stroke-width="2.400" fill="none"/></svg><span class="t" style="left:984.00px;top:92.30px;font:400 13px/15.6px 'Liberation Sans',sans-serif;color:#6e7175;letter-spacing:-0.092px;">Google Account</span><div class="b" style="left:1090.10px;top:93.70px;width:17.00px;height:12.00px;background:#d9b0aa;border-radius:2px;border:1px solid #a98d8a;"></div><div class="b" style="left:1093.60px;top:96.20px;width:3.00px;height:3.00px;background:#7a5c5a;border-radius:50%;"></div><div class="b" style="left:1100.60px;top:96.20px;width:3.00px;height:3.00px;background:#7a5c5a;border-radius:50%;"></div><div class="b" style="left:1091.60px;top:105.70px;width:4.00px;height:2.50px;background:#7d6a68;"></div><div class="b" style="left:1101.60px;top:105.70px;width:4.00px;height:2.50px;background:#7d6a68;"></div><span class="t" style="left:1113.00px;top:92.30px;font:400 13px/15.6px 'Liberation Sans',sans-serif;color:#6e7175;letter-spacing:-0.432px;">VIA | VIA</span><div class="b" style="left:1177.50px;top:91.70px;width:17.00px;height:17.00px;background:#55636d;"></div><span class="t" style="left:1179.25px;top:94.33px;font:400 10px/12.0px 'Liberation Sans',sans-serif;color:#fff;letter-spacing:0.080px;">AE</span><span class="t" style="left:1200.00px;top:92.30px;font:400 13px/15.6px 'Liberation Sans',sans-serif;color:#6e7175;letter-spacing:-0.251px;">Interest Rate Calc...</span><svg style="left:1331.30px;top:91.20px" width="17" height="18" viewBox="0 0 17 18"><path d="M8.500 .500l7.500 4.200v8.600L8.500 17.500 1 13.300V4.700z" fill="#5f6fb0"/></svg><span class="t" style="left:1335.91px;top:91.15px;font:400 14px/16.8px 'Liberation Sans',sans-serif;color:#fff;">e</span><span class="t" style="left:1354.00px;top:92.30px;font:400 13px/15.6px 'Liberation Sans',sans-serif;color:#6e7175;letter-spacing:-0.237px;">Computational Ch...</span><svg style="left:1541.80px;top:96.20px" width="10" height="8" viewBox="0 0 10 8"><path d="M.800 .800L4 4 .800 7.200M5.600 .800L8.800 4 5.600 7.200" stroke="#8a8d91" stroke-width="1.100" fill="none"/></svg></div><div class="sc" style="left:100.4px;top:242.20px;width:2815px;height:1583.5px;transform:scale(1.0535)"><div class="b" style="left:0.00px;top:0.00px;width:2815.00px;height:1586.50px;background:#2f2f2f;"></div><div class="b" style="left:0.00px;top:0.00px;width:2815.00px;height:1.60px;background:#8c8c8c;"></div><span class="t" style="left:30.00px;top:7.41px;font:400 22.4px/26.88px 'DejaVu Sans',sans-serif;color:#f2f2f2;letter-spacing:-0.121px;-webkit-text-stroke:0.5px #f2f2f2;">File</span><span class="t" style="left:126.70px;top:7.41px;font:400 22.4px/26.88px 'DejaVu Sans',sans-serif;color:#f2f2f2;letter-spacing:-0.220px;-webkit-text-stroke:0.5px #f2f2f2;">Edit</span><span class="t" style="left:228.00px;top:7.41px;font:400 22.4px/26.88px 'DejaVu Sans',sans-serif;color:#f2f2f2;letter-spacing:0.016px;-webkit-text-stroke:0.5px #f2f2f2;">Utility</span><span class="t" style="left:353.60px;top:7.41px;font:400 22.4px/26.88px 'DejaVu Sans',sans-serif;color:#f2f2f2;letter-spacing:-0.892px;-webkit-text-stroke:0.5px #f2f2f2;">Help</span><div class="b" style="left:2571.60px;top:43.40px;width:22.00px;height:1417.00px;background:#303030;"></div><div class="b" style="left:0.00px;top:43.40px;width:2571.60px;height:1417.00px;background:#000;border:4.4px solid #f0f0f0;"></div><div class="b" style="left:4.40px;top:47.80px;width:2562.80px;height:36.20px;background:#383838;border-bottom:1.6px solid #8d8d8d;"></div><span class="t" style="left:24.50px;top:52.44px;font:400 23px/27.6px 'DejaVu Sans',sans-serif;color:#ededed;letter-spacing:0.335px;">Waveform View</span><svg style="left:4.4px;top:84.5px;overflow:hidden" width="2563.2" height="1371.5" viewBox="0 0 2563.2 1371.5"><g stroke="#808080" stroke-width="1.900" fill="none"><path d="M24.63 137.15H2563.2" stroke-dasharray="2 49.264"/><path d="M24.63 274.30H2563.2" stroke-dasharray="2 49.264"/><path d="M24.63 411.45H2563.2" stroke-dasharray="2 49.264"/><path d="M24.63 548.60H2563.2" stroke-dasharray="2 49.264"/><path d="M24.63 685.75H2563.2" stroke-dasharray="2 49.264"/><path d="M24.63 822.90H2563.2" stroke-dasharray="2 49.264"/><path d="M24.63 960.05H2563.2" stroke-dasharray="2 49.264"/><path d="M24.63 1097.20H2563.2" stroke-dasharray="2 49.264"/><path d="M24.63 1234.35H2563.2" stroke-dasharray="2 49.264"/><path d="M230.69 26.43V1371.5" stroke-dasharray="2 25.430"/><path d="M487.01 26.43V1371.5" stroke-dasharray="2 25.430"/><path d="M743.33 26.43V1371.5" stroke-dasharray="2 25.430"/><path d="M999.65 26.43V1371.5" stroke-dasharray="2 25.430"/><path d="M1255.97 26.43V1371.5" stroke-dasharray="2 25.430"/><path d="M1512.29 26.43V1371.5" stroke-dasharray="2 25.430"/><path d="M1768.61 26.43V1371.5" stroke-dasharray="2 25.430"/><path d="M2024.93 26.43V1371.5" stroke-dasharray="2 25.430"/><path d="M2281.25 26.43V1371.5" stroke-dasharray="2 25.430"/><path d="M2537.57 26.43V1371.5" stroke-dasharray="2 25.430"/></g><path d="M24.83 2H2563.2" stroke="#858585" stroke-width="3.400" stroke-dasharray="1.600 49.664" fill="none"/><path d="M487.0 57V1371.5" stroke="#d2d2d2" stroke-width="2" stroke-dasharray="7.500 7" fill="none"/><path d="M56 685.5H2533.2" stroke="#c8c8c8" stroke-width="1.600" stroke-dasharray="7 7.600" fill="none"/><path d="M0.0,515.8 14.0,560.8 28.0,611.5 42.0,661.6 56.0,716.8 70.0,767.0 84.0,815.6 98.0,862.8 112.0,906.5 126.0,942.4 140.0,972.1 154.0,995.1 168.0,1011.0 182.0,1023.5 196.0,1021.4 210.0,1016.5 224.0,999.0 238.0,976.5 252.0,948.7 266.0,913.7 280.0,870.3 294.0,826.6 308.0,776.3 322.0,724.9 336.0,674.9 350.0,620.5 364.0,570.0 378.0,523.1 392.0,482.5 406.0,440.5 420.0,408.2 434.0,383.5 448.0,361.2 462.0,351.0 476.0,347.1 490.0,354.6 504.0,367.1 518.0,384.3 532.0,413.8 546.0,445.5 560.0,485.6 574.0,528.2 588.0,577.4 602.0,629.9 616.0,679.8 630.0,731.8 644.0,782.5 658.0,833.3 672.0,875.2 686.0,915.4 700.0,953.3 714.0,979.2 728.0,1004.1 742.0,1017.4 756.0,1024.4 770.0,1022.7 784.0,1012.1 798.0,994.2 812.0,969.3 826.0,936.6 840.0,898.9 854.0,856.9 868.0,812.3 882.0,763.5 896.0,707.8 910.0,658.8 924.0,607.9 938.0,555.4 952.0,509.6 966.0,466.6 980.0,430.7 994.0,399.5 1008.0,376.7 1022.0,360.7 1036.0,348.5 1050.0,349.6 1064.0,355.8 1078.0,368.6 1092.0,392.1 1106.0,421.5 1120.0,456.2 1134.0,498.7 1148.0,546.0 1162.0,594.0 1176.0,645.1 1190.0,694.5 1204.0,749.2 1218.0,796.2 1232.0,843.3 1246.0,888.7 1260.0,927.8 1274.0,963.6 1288.0,989.3 1302.0,1006.5 1316.0,1020.4 1330.0,1024.7 1344.0,1019.2 1358.0,1004.9 1372.0,987.4 1386.0,961.0 1400.0,928.0 1414.0,889.1 1428.0,845.3 1442.0,794.4 1456.0,747.4 1470.0,692.4 1484.0,642.8 1498.0,591.0 1512.0,541.5 1526.0,498.4 1540.0,455.6 1554.0,422.6 1568.0,390.8 1582.0,371.0 1596.0,354.4 1610.0,349.9 1624.0,352.1 1638.0,359.2 1652.0,376.5 1666.0,403.0 1680.0,432.1 1694.0,469.4 1708.0,511.7 1722.0,557.6 1736.0,608.3 1750.0,659.9 1764.0,712.2 1778.0,762.3 1792.0,810.6 1806.0,860.0 1820.0,900.5 1834.0,940.5 1848.0,969.0 1862.0,994.7 1876.0,1013.6 1890.0,1021.3 1904.0,1024.9 1918.0,1018.5 1932.0,1003.1 1946.0,978.1 1960.0,950.7 1974.0,915.6 1988.0,876.4 2002.0,828.7 2016.0,783.0 2030.0,729.5 2044.0,678.5 2058.0,628.3 2072.0,574.0 2086.0,528.5 2100.0,482.5 2114.0,442.8 2128.0,412.0 2142.0,382.7 2156.0,366.3 2170.0,352.8 2184.0,346.6 2198.0,352.3 2212.0,365.4 2226.0,383.7 2240.0,411.2 2254.0,442.5 2268.0,480.3 2282.0,524.6 2296.0,572.9 2310.0,623.6 2324.0,674.3 2338.0,725.9 2352.0,776.8 2366.0,825.3 2380.0,870.8 2394.0,913.2 2408.0,949.6 2422.0,977.2 2436.0,999.2 2450.0,1013.9 2464.0,1020.7 2478.0,1020.9 2492.0,1013.0 2506.0,994.2 2520.0,972.9 2534.0,942.7 2548.0,905.6 2562.0,861.1 2576.0,814.6" stroke="#98bb58" stroke-width="1.400" fill="none"/><path d="M0.0,403.5 14.0,372.3 28.0,347.3 42.0,331.0 56.0,323.4 70.0,328.2 84.0,337.1 98.0,354.2 112.0,384.2 126.0,416.2 140.0,458.1 154.0,504.0 168.0,553.1 182.0,608.8 196.0,660.4 210.0,717.7 224.0,773.5 238.0,827.1 252.0,877.1 266.0,925.9 280.0,964.8 294.0,996.8 308.0,1023.5 322.0,1041.0 336.0,1049.6 350.0,1054.1 364.0,1046.1 378.0,1026.0 392.0,1004.5 406.0,975.3 420.0,934.9 434.0,892.2 448.0,840.6 462.0,787.1 476.0,731.4 490.0,677.8 504.0,622.1 518.0,567.5 532.0,515.6 546.0,467.8 560.0,427.2 574.0,390.2 588.0,360.6 602.0,343.5 616.0,330.7 630.0,326.5 644.0,328.9 658.0,343.0 672.0,364.8 686.0,393.2 700.0,429.6 714.0,469.8 728.0,516.4 742.0,567.8 756.0,621.8 770.0,677.6 784.0,733.6 798.0,791.2 812.0,843.4 826.0,891.5 840.0,936.9 854.0,974.4 868.0,1008.1 882.0,1028.4 896.0,1046.1 910.0,1054.0 924.0,1051.8 938.0,1039.3 952.0,1020.3 966.0,997.6 980.0,961.0 994.0,920.5 1008.0,873.9 1022.0,825.5 1036.0,772.7 1050.0,714.6 1064.0,662.3 1078.0,604.6 1092.0,550.1 1106.0,503.6 1120.0,456.2 1134.0,417.3 1148.0,382.0 1162.0,357.5 1176.0,334.2 1190.0,327.5 1204.0,323.1 1218.0,330.7 1232.0,345.4 1246.0,370.6 1260.0,405.5 1274.0,441.7 1288.0,487.2 1302.0,535.1 1316.0,588.1 1330.0,642.3 1344.0,695.8 1358.0,752.4 1372.0,809.4 1386.0,856.8 1400.0,908.4 1414.0,949.5 1428.0,982.6 1442.0,1012.3 1456.0,1035.0 1470.0,1050.3 1484.0,1050.9 1498.0,1050.3 1512.0,1036.0 1526.0,1013.9 1540.0,984.8 1554.0,949.9 1568.0,909.3 1582.0,863.0 1596.0,810.9 1610.0,757.4 1624.0,699.8 1638.0,642.6 1652.0,588.0 1666.0,534.2 1680.0,486.1 1694.0,443.8 1708.0,405.1 1722.0,372.2 1736.0,350.5 1750.0,333.1 1764.0,327.8 1778.0,328.1 1792.0,335.4 1806.0,355.7 1820.0,377.9 1834.0,413.2 1848.0,453.0 1862.0,499.0 1876.0,549.1 1890.0,601.0 1904.0,658.9 1918.0,715.4 1932.0,772.6 1946.0,823.8 1960.0,875.6 1974.0,920.2 1988.0,962.0 2002.0,994.7 2016.0,1020.3 2030.0,1037.5 2044.0,1049.8 2058.0,1054.8 2072.0,1047.3 2086.0,1031.2 2100.0,1007.3 2114.0,973.5 2128.0,939.2 2142.0,892.5 2156.0,847.1 2170.0,793.6 2184.0,738.3 2198.0,684.0 2212.0,623.9 2226.0,572.5 2240.0,519.1 2254.0,472.9 2268.0,428.0 2282.0,396.2 2296.0,363.0 2310.0,340.5 2324.0,330.3 2338.0,326.3 2352.0,328.2 2366.0,338.3 2380.0,362.6 2394.0,390.4 2408.0,424.1 2422.0,466.3 2436.0,514.4 2450.0,563.7 2464.0,617.6 2478.0,675.9 2492.0,734.2 2506.0,788.8 2520.0,840.3 2534.0,887.7 2548.0,932.0 2562.0,973.0 2576.0,1001.3" stroke="#d6364f" stroke-width="1.500" fill="none"/><path d="M200.6 0V1371.5" stroke="#f3b08a" stroke-width="2" stroke-dasharray="7.500 7.500" fill="none"/><path d="M770.0 0V1371.5" stroke="#f3b08a" stroke-width="2" stroke-dasharray="7.500 7.500" fill="none"/><path d="M0 275.9H2563.2M0 1097.5H2563.2" stroke="#e6e6e6" stroke-width="2" fill="none"/><path d="M89.6 275.9V1097.5" stroke="#e8262a" stroke-width="2.200" stroke-dasharray="26 6" fill="none"/></svg><span class="t" style="left:2531.10px;top:211.20px;font:400 18.5px/22.2px 'DejaVu Sans',sans-serif;color:#88bb3b;letter-spacing:-0.969px;">4 V</span><span class="t" style="left:2531.10px;top:348.35px;font:400 18.5px/22.2px 'DejaVu Sans',sans-serif;color:#88bb3b;letter-spacing:-0.969px;">3 V</span><span class="t" style="left:2531.10px;top:485.50px;font:400 18.5px/22.2px 'DejaVu Sans',sans-serif;color:#88bb3b;letter-spacing:-0.969px;">2 V</span><span class="t" style="left:2531.10px;top:622.65px;font:400 18.5px/22.2px 'DejaVu Sans',sans-serif;color:#88bb3b;letter-spacing:-0.969px;">1 V</span><span class="t" style="left:2525.00px;top:896.95px;font:400 18.5px/22.2px 'DejaVu Sans',sans-serif;color:#88bb3b;letter-spacing:-0.871px;">-1 V</span><span class="t" style="left:2525.00px;top:1034.10px;font:400 18.5px/22.2px 'DejaVu Sans',sans-serif;color:#88bb3b;letter-spacing:-0.871px;">-2 V</span><span class="t" style="left:2525.00px;top:1171.25px;font:400 18.5px/22.2px 'DejaVu Sans',sans-serif;color:#88bb3b;letter-spacing:-0.871px;">-3 V</span><span class="t" style="left:2525.00px;top:1308.40px;font:400 18.5px/22.2px 'DejaVu Sans',sans-serif;color:#88bb3b;letter-spacing:-0.871px;">-4 V</span><svg style="left:2507.500px;top:96px" width="50" height="50" viewBox="0 0 50 50"><path d="M0 0h44a6 6 0 0 1 6 6v44z" fill="#7d7d7d"/><circle cx="38" cy="11" r="5.500" stroke="#e0e0e0" stroke-width="2.400" fill="none"/><path d="M34 15.500L24.500 25" stroke="#e0e0e0" stroke-width="3" fill="none"/></svg><span class="t" style="left:208.59px;top:1429.53px;font:400 19px/22.8px 'DejaVu Sans',sans-serif;color:#b4b4b4;letter-spacing:-1.003px;">-10 ns</span><span class="t" style="left:479.41px;top:1429.53px;font:400 19px/22.8px 'DejaVu Sans',sans-serif;color:#b4b4b4;letter-spacing:-1.343px;">0 s</span><span class="t" style="left:724.73px;top:1429.53px;font:400 19px/22.8px 'DejaVu Sans',sans-serif;color:#b4b4b4;letter-spacing:-1.232px;">10 ns</span><span class="t" style="left:981.05px;top:1429.53px;font:400 19px/22.8px 'DejaVu Sans',sans-serif;color:#b4b4b4;letter-spacing:-1.232px;">20 ns</span><span class="t" style="left:1237.37px;top:1429.53px;font:400 19px/22.8px 'DejaVu Sans',sans-serif;color:#b4b4b4;letter-spacing:-1.232px;">30 ns</span><span class="t" style="left:1493.69px;top:1429.53px;font:400 19px/22.8px 'DejaVu Sans',sans-serif;color:#b4b4b4;letter-spacing:-1.232px;">40 ns</span><span class="t" style="left:1750.01px;top:1429.53px;font:400 19px/22.8px 'DejaVu Sans',sans-serif;color:#b4b4b4;letter-spacing:-1.232px;">50 ns</span><span class="t" style="left:2006.33px;top:1429.53px;font:400 19px/22.8px 'DejaVu Sans',sans-serif;color:#b4b4b4;letter-spacing:-1.232px;">60 ns</span><span class="t" style="left:2262.65px;top:1429.53px;font:400 19px/22.8px 'DejaVu Sans',sans-serif;color:#b4b4b4;letter-spacing:-1.232px;">70 ns</span><svg style="left:475.41px;top:84.50px" width="32" height="56" viewBox="0 0 32 56"><path d="M0.2 0h31.6L16 14.6z" fill="#f58c1f"/><path d="M2.300 17.300h27.400v27H20.600L16 53l-4.600-8.700H2.300z" fill="#000" stroke="#f58c1f" stroke-width="3" stroke-linejoin="miter"/></svg><span class="t" style="left:484.25px;top:104.13px;font:700 21px/25.2px 'DejaVu Sans',sans-serif;color:#f58c1f;">T</span><svg style="left:858.7px;top:54px" width="855.2" height="25" viewBox="0 0 855.2 25"><path d="M11 1H1v23h10M844.2 1h10v23h-10" stroke="#dcdcdc" stroke-width="2" fill="none"/><path d="M1 12.500h853.2" stroke="#cfcfcf" stroke-width="2.600"/></svg><svg style="left:1007.50px;top:48.60px" width="26" height="36" viewBox="0 0 26 36"><path d="M0.500 0h25L13 7.600z" fill="#f58c1f"/><path d="M4.200 11.200h17.600v16.400H16L13 33l-3-5.400H4.200z" fill="#000" stroke="#f58c1f" stroke-width="2.400"/></svg><span class="t" style="left:1015.90px;top:60.63px;font:700 13.5px/16.2px 'DejaVu Sans',sans-serif;color:#f58c1f;">T</span><svg style="left:9px;top:751.0px" width="53" height="38" viewBox="0 0 53 38"><path d="M5 0h34l14 19-14 19H5a5 5 0 0 1-5-5V5a5 5 0 0 1 5-5z" fill="#8fd12f"/></svg><span class="t" style="left:15.50px;top:759.84px;font:700 17.5px/21.0px 'Liberation Sans',sans-serif;color:#24420c;letter-spacing:0.922px;">C 4</span><span class="t" style="left:2530.28px;top:758.08px;font:400 20px/24.0px 'DejaVu Sans',sans-serif;color:#88bb3b;">0</span><svg style="left:2537.400px;top:754.0px" width="28" height="32" viewBox="0 0 28 32"><path d="M0 16L18 0.500v12h10v7H18v12z" fill="#e8466a"/></svg><div class="b" style="left:93.97px;top:321.12px;width:204.94px;height:36.83px;background:rgba(68,68,68,.84);border-radius:5px;"></div><span class="t" style="left:99.97px;top:325.92px;font:400 21px/25.2px 'Liberation Sans',sans-serif;color:#d8d8d8;">v: 3 V</span><div class="b" style="left:129.0px;top:759.8px;width:76px;height:30px;opacity:0.4"><svg style="left:0;top:0" width="76" height="30" viewBox="0 0 76 30"><path d="M75 10L58 1.200H1.200V28.800H58z" fill="#241407" stroke="#f0a35e" stroke-width="1.800"/></svg><span class="t" style="left:7.07px;top:6.36px;font:700 16px/19.2px 'DejaVu Sans',sans-serif;color:#f4b777;">50 %</span></div><div class="b" style="left:93.97px;top:750.83px;width:204.94px;height:39.39px;background:rgba(68,68,68,.84);border-radius:5px;"></div><span class="t" style="left:99.97px;top:757.82px;font:400 21px/25.2px 'Liberation Sans',sans-serif;color:#d8d8d8;">Δv: 6 V</span><div class="b" style="left:774.4px;top:759.8px;width:76px;height:30px;opacity:1"><svg style="left:0;top:0" width="76" height="30" viewBox="0 0 76 30"><path d="M1 10L18 1.200H74.800V28.800H18z" fill="#241407" stroke="#f0a35e" stroke-width="1.800"/></svg><span class="t" style="left:25.07px;top:6.36px;font:700 16px/19.2px 'DejaVu Sans',sans-serif;color:#f4b777;">50 %</span></div><div class="b" style="left:93.97px;top:1182.53px;width:204.94px;height:36.73px;background:rgba(68,68,68,.84);border-radius:0 0 5px 5px;"></div><span class="t" style="left:99.97px;top:1187.81px;font:400 21px/25.2px 'Liberation Sans',sans-serif;color:#d8d8d8;">v: -3 V</span><div class="b" style="left:11.01px;top:345.35px;width:74.04px;height:29.00px;background:#1d1d1d;border-radius:10px;"></div><div class="b" style="left:13.77px;top:348.85px;width:22.00px;height:22.00px;background:#2b8fe0;border-radius:50%;"></div><span class="t" style="left:18.77px;top:349.41px;font:400 18px/21.6px 'Liberation Sans',sans-serif;color:#e8f4ff;">A</span><div class="b" style="left:42.34px;top:346.35px;width:39.49px;height:27.00px;background:#8bc53f;border-radius:6px;"></div><span class="t" style="left:48.66px;top:347.37px;font:400 21px/25.2px 'Liberation Sans',sans-serif;color:#2d4a12;">C4</span><div class="b" style="left:11.01px;top:1167.18px;width:74.04px;height:29.00px;background:#1d1d1d;border-radius:10px;"></div><div class="b" style="left:13.77px;top:1170.68px;width:22.00px;height:22.00px;background:#2b8fe0;border-radius:50%;"></div><span class="t" style="left:18.77px;top:1171.24px;font:400 18px/21.6px 'Liberation Sans',sans-serif;color:#e8f4ff;">B</span><div class="b" style="left:42.34px;top:1168.18px;width:39.49px;height:27.00px;background:#8bc53f;border-radius:6px;"></div><span class="t" style="left:48.66px;top:1169.20px;font:400 21px/25.2px 'Liberation Sans',sans-serif;color:#2d4a12;">C4</span><div class="b" style="left:2593.60px;top:43.40px;width:221.40px;height:1417.00px;background:#2e2e2e;border-left:2px solid #4b4b4b;border-top:1.600px solid #4b4b4b;border-bottom:1.600px solid #4b4b4b;"></div><span class="t" style="left:2642.80px;top:43.69px;font:700 22.3px/26.76px 'Liberation Sans',sans-serif;color:#fff;letter-spacing:1.124px;">Add New...</span><div class="b" style="left:2607.00px;top:80.70px;width:91.50px;height:52.50px;background:#2bb5ee;border-radius:9px;border:1.5px solid #2bb5ee;box-shadow:inset 0 -3px 4px rgba(0,0,0,.35);"></div><span class="t" style="left:2615.95px;top:94.55px;font:400 20.5px/24.6px 'Liberation Sans',sans-serif;color:#06263c;letter-spacing:0.262px;-webkit-text-stroke:0.55px #06263c;">Cursors</span><div class="b" style="left:2712.70px;top:80.70px;width:91.50px;height:52.50px;background:#252525;border-radius:9px;border:1.5px solid #5a5a5a;box-shadow:inset 0 -3px 4px rgba(0,0,0,.35);"></div><span class="t" style="left:2721.65px;top:94.55px;font:400 20.5px/24.6px 'Liberation Sans',sans-serif;color:#fff;letter-spacing:1.398px;-webkit-text-stroke:0.55px #fff;">Callout</span><div class="b" style="left:2607.00px;top:148.00px;width:91.50px;height:52.50px;background:#252525;border-radius:9px;border:1.5px solid #5a5a5a;box-shadow:inset 0 -3px 4px rgba(0,0,0,.35);"></div><span class="t" style="left:2609.55px;top:161.85px;font:400 20.5px/24.6px 'Liberation Sans',sans-serif;color:#fff;letter-spacing:0.949px;-webkit-text-stroke:0.55px #fff;">Measure</span><div class="b" style="left:2712.70px;top:148.00px;width:91.50px;height:52.50px;background:#252525;border-radius:9px;border:1.5px solid #5a5a5a;box-shadow:inset 0 -3px 4px rgba(0,0,0,.35);"></div><span class="t" style="left:2724.70px;top:161.85px;font:400 20.5px/24.6px 'Liberation Sans',sans-serif;color:#fff;letter-spacing:0.424px;-webkit-text-stroke:0.55px #fff;">Search</span><div class="b" style="left:2607.00px;top:215.50px;width:91.50px;height:52.50px;background:#252525;border-radius:9px;border:1.5px solid #5a5a5a;box-shadow:inset 0 -3px 4px rgba(0,0,0,.35);"></div><span class="t" style="left:2617.75px;top:217.85px;font:400 20.5px/24.6px 'Liberation Sans',sans-serif;color:#fff;letter-spacing:0.235px;-webkit-text-stroke:0.55px #fff;">Results</span><span class="t" style="left:2626.10px;top:240.85px;font:400 20.5px/24.6px 'Liberation Sans',sans-serif;color:#fff;letter-spacing:0.858px;-webkit-text-stroke:0.55px #fff;">Table</span><div class="b" style="left:2712.70px;top:215.50px;width:91.50px;height:52.50px;background:#252525;border-radius:9px;border:1.5px solid #5a5a5a;box-shadow:inset 0 -3px 4px rgba(0,0,0,.35);"></div><span class="t" style="left:2737.95px;top:229.35px;font:400 20.5px/24.6px 'Liberation Sans',sans-serif;color:#fff;letter-spacing:1.418px;-webkit-text-stroke:0.55px #fff;">Plot</span><div class="b" style="left:2600.00px;top:277.20px;width:210.00px;height:1.50px;background:#4d4d4d;"></div><div class="b" style="left:2607.00px;top:288.00px;width:91.50px;height:52.50px;background:#252525;border-radius:9px;border:1.5px solid #5a5a5a;box-shadow:inset 0 -3px 4px rgba(0,0,0,.35);"></div><svg style="left:2633.0px;top:295.0px" width="42" height="40" viewBox="0 0 42 40"><rect x="2" y="2" width="32" height="28" fill="none" stroke="#e8e8e8" stroke-width="3" stroke-dasharray="5 4"/><circle cx="21" cy="13" r="6.500" fill="none" stroke="#e8e8e8" stroke-width="2.600"/><path d="M16.500 18L10 25" stroke="#e8e8e8" stroke-width="3.200"/><path d="M27 20v15.500l3.800-3.600 2.800 6 2.800-1.300-2.800-5.900 5.200-.400z" fill="#e8e8e8"/></svg><div class="b" style="left:2712.70px;top:288.00px;width:91.50px;height:52.50px;background:#252525;border-radius:9px;border:1.5px solid #5a5a5a;box-shadow:inset 0 -3px 4px rgba(0,0,0,.35);"></div><span class="t" style="left:2721.30px;top:301.85px;font:400 20.5px/24.6px 'Liberation Sans',sans-serif;color:#fff;letter-spacing:1.501px;-webkit-text-stroke:0.55px #fff;">More...</span><div class="b" style="left:2600.00px;top:353.00px;width:210.00px;height:1.50px;background:#4d4d4d;"></div><div class="b" style="left:2599.70px;top:374.70px;width:210.80px;height:197.00px;background:#cbcbcb;border-radius:6.500px;overflow:hidden;box-shadow:0 0 0 1px #3d3d3d;"><div class="b" style="left:0.00px;top:0.00px;width:210.80px;height:27.00px;background:#59595b;"></div></div><span class="t" style="left:2607.20px;top:376.00px;font:400 20.5px/24.6px 'Liberation Sans',sans-serif;color:#fff;letter-spacing:0.462px;-webkit-text-stroke:0.55px #fff;-webkit-text-stroke-width:0.7px;">Meas 1</span><div class="b" style="left:2769.50px;top:380.20px;width:33.00px;height:16.50px;background:#e8466a;border-radius:6px;box-shadow:0 0 0 1px rgba(0,0,0,.35);"></div><span class="t" style="left:2781.83px;top:379.80px;font:700 15px/18.0px 'Liberation Sans',sans-serif;color:#fff;">3</span><span class="t" style="left:2607.00px;top:405.30px;font:400 20.5px/24.6px 'Liberation Sans',sans-serif;color:#1c1c1c;letter-spacing:0.509px;">Maximum</span><span class="t" style="left:2607.00px;top:433.70px;font:400 20.5px/24.6px 'Liberation Sans',sans-serif;color:#1c1c1c;letter-spacing:0.474px;">µ': 2.631 V</span><span class="t" style="left:2607.00px;top:463.70px;font:400 20.5px/24.6px 'Liberation Sans',sans-serif;color:#1c1c1c;letter-spacing:0.552px;">σ': 0.000 V (N'=1)</span><span class="t" style="left:2607.00px;top:491.30px;font:400 20.5px/24.6px 'Liberation Sans',sans-serif;color:#1c1c1c;letter-spacing:0.586px;">M: 2.660 V</span><span class="t" style="left:2607.00px;top:519.00px;font:400 20.5px/24.6px 'Liberation Sans',sans-serif;color:#1c1c1c;letter-spacing:0.386px;">m: 2.592 V</span><span class="t" style="left:2607.00px;top:546.70px;font:400 20.5px/24.6px 'Liberation Sans',sans-serif;color:#1c1c1c;letter-spacing:0.386px;">N: 9782</span><div class="b" style="left:2606.70px;top:486.90px;width:193.00px;height:1.00px;background:#8f8f8f;"></div><div class="b" style="left:2599.70px;top:584.80px;width:210.80px;height:197.00px;background:#cbcbcb;border-radius:6.500px;overflow:hidden;box-shadow:0 0 0 1px #3d3d3d;"><div class="b" style="left:0.00px;top:0.00px;width:210.80px;height:27.00px;background:#59595b;"></div></div><span class="t" style="left:2607.20px;top:586.10px;font:400 20.5px/24.6px 'Liberation Sans',sans-serif;color:#fff;letter-spacing:0.462px;-webkit-text-stroke:0.55px #fff;-webkit-text-stroke-width:0.7px;">Meas 2</span><div class="b" style="left:2769.50px;top:590.30px;width:33.00px;height:16.50px;background:#e8466a;border-radius:6px;box-shadow:0 0 0 1px rgba(0,0,0,.35);"></div><span class="t" style="left:2781.83px;top:589.90px;font:700 15px/18.0px 'Liberation Sans',sans-serif;color:#fff;">3</span><span class="t" style="left:2607.00px;top:615.40px;font:400 20.5px/24.6px 'Liberation Sans',sans-serif;color:#1c1c1c;letter-spacing:0.908px;">Minimum</span><span class="t" style="left:2607.00px;top:643.80px;font:400 20.5px/24.6px 'Liberation Sans',sans-serif;color:#1c1c1c;letter-spacing:0.490px;">µ': -2.689 V</span><span class="t" style="left:2607.00px;top:673.80px;font:400 20.5px/24.6px 'Liberation Sans',sans-serif;color:#1c1c1c;letter-spacing:0.552px;">σ': 0.000 V (N'=1)</span><span class="t" style="left:2607.00px;top:701.40px;font:400 20.5px/24.6px 'Liberation Sans',sans-serif;color:#1c1c1c;letter-spacing:0.594px;">M: -2.656 V</span><span class="t" style="left:2607.00px;top:729.10px;font:400 20.5px/24.6px 'Liberation Sans',sans-serif;color:#1c1c1c;letter-spacing:0.412px;">m: -2.736 V</span><span class="t" style="left:2607.00px;top:756.80px;font:400 20.5px/24.6px 'Liberation Sans',sans-serif;color:#1c1c1c;letter-spacing:0.386px;">N: 9782</span><div class="b" style="left:2606.70px;top:697.00px;width:193.00px;height:1.00px;background:#8f8f8f;"></div><div class="b" style="left:2599.70px;top:794.30px;width:210.80px;height:197.00px;background:#cbcbcb;border-radius:6.500px;overflow:hidden;box-shadow:0 0 0 1px #3d3d3d;"><div class="b" style="left:0.00px;top:0.00px;width:210.80px;height:27.00px;background:#59595b;"></div></div><span class="t" style="left:2607.20px;top:795.60px;font:400 20.5px/24.6px 'Liberation Sans',sans-serif;color:#fff;letter-spacing:0.462px;-webkit-text-stroke:0.55px #fff;-webkit-text-stroke-width:0.7px;">Meas 3</span><div class="b" style="left:2769.50px;top:799.80px;width:33.00px;height:16.50px;background:#e8466a;border-radius:6px;box-shadow:0 0 0 1px rgba(0,0,0,.35);"></div><span class="t" style="left:2781.83px;top:799.40px;font:700 15px/18.0px 'Liberation Sans',sans-serif;color:#fff;">3</span><span class="t" style="left:2607.00px;top:824.90px;font:400 20.5px/24.6px 'Liberation Sans',sans-serif;color:#1c1c1c;letter-spacing:0.649px;">Amplitude</span><span class="t" style="left:2607.00px;top:853.30px;font:400 20.5px/24.6px 'Liberation Sans',sans-serif;color:#1c1c1c;letter-spacing:0.474px;">µ': 5.320 V</span><span class="t" style="left:2607.00px;top:883.30px;font:400 20.5px/24.6px 'Liberation Sans',sans-serif;color:#1c1c1c;letter-spacing:0.552px;">σ': 0.000 V (N'=1)</span><span class="t" style="left:2607.00px;top:910.90px;font:400 20.5px/24.6px 'Liberation Sans',sans-serif;color:#1c1c1c;letter-spacing:0.586px;">M: 5.365 V</span><span class="t" style="left:2607.00px;top:938.60px;font:400 20.5px/24.6px 'Liberation Sans',sans-serif;color:#1c1c1c;letter-spacing:0.386px;">m: 5.203 V</span><span class="t" style="left:2607.00px;top:966.30px;font:400 20.5px/24.6px 'Liberation Sans',sans-serif;color:#1c1c1c;letter-spacing:0.386px;">N: 9782</span><div class="b" style="left:2606.70px;top:906.50px;width:193.00px;height:1.00px;background:#8f8f8f;"></div><div class="b" style="left:2599.70px;top:1004.00px;width:210.80px;height:197.00px;background:#cbcbcb;border-radius:6.500px;overflow:hidden;box-shadow:0 0 0 1px #3d3d3d;"><div class="b" style="left:0.00px;top:0.00px;width:210.80px;height:27.00px;background:#000;"></div></div><span class="t" style="left:2607.20px;top:1005.30px;font:400 20.5px/24.6px 'Liberation Sans',sans-serif;color:#fff;letter-spacing:0.462px;-webkit-text-stroke:0.55px #fff;-webkit-text-stroke-width:0.7px;">Meas 4</span><div class="b" style="left:2769.50px;top:1009.50px;width:33.00px;height:16.50px;background:#e8466a;border-radius:6px;box-shadow:0 0 0 1px rgba(0,0,0,.35);"></div><span class="t" style="left:2781.83px;top:1009.10px;font:700 15px/18.0px 'Liberation Sans',sans-serif;color:#fff;">3</span><span class="t" style="left:2607.00px;top:1034.60px;font:400 20.5px/24.6px 'Liberation Sans',sans-serif;color:#1c1c1c;letter-spacing:-0.317px;">Frequency</span><span class="t" style="left:2607.00px;top:1063.00px;font:400 20.5px/24.6px 'Liberation Sans',sans-serif;color:#1c1c1c;letter-spacing:0.635px;">µ': 45.00 MHz</span><span class="t" style="left:2607.00px;top:1093.00px;font:400 20.5px/24.6px 'Liberation Sans',sans-serif;color:#1c1c1c;letter-spacing:0.596px;">σ': 29.16 kHz</span><span class="t" style="left:2607.00px;top:1120.60px;font:400 20.5px/24.6px 'Liberation Sans',sans-serif;color:#1c1c1c;letter-spacing:0.700px;">M: 45.21 MHz</span><span class="t" style="left:2607.00px;top:1148.30px;font:400 20.5px/24.6px 'Liberation Sans',sans-serif;color:#1c1c1c;letter-spacing:0.575px;">m: 44.79 MHz</span><span class="t" style="left:2607.00px;top:1176.00px;font:400 20.5px/24.6px 'Liberation Sans',sans-serif;color:#1c1c1c;letter-spacing:0.475px;">N: 39128</span><div class="b" style="left:2606.70px;top:1116.20px;width:193.00px;height:1.00px;background:#8f8f8f;"></div><div class="b" style="left:4.10px;top:1470.20px;width:132.70px;height:111.60px;background:#cbcbcb;border-radius:6.500px;overflow:hidden;box-shadow:0 0 0 1px #3d3d3d;"><div class="b" style="left:0.00px;top:0.00px;width:132.70px;height:28.20px;background:#4b222a;"></div></div><span class="t" style="left:11.60px;top:1472.70px;font:400 20.5px/24.6px 'Liberation Sans',sans-serif;color:#ffe9ea;letter-spacing:0.074px;-webkit-text-stroke:0.55px #ffe9ea;-webkit-text-stroke-width:0.7px;">Ch 3</span><div class="b" style="left:143.80px;top:1470.20px;width:131.70px;height:111.60px;background:#cbcbcb;border-radius:6.500px;overflow:hidden;box-shadow:0 0 0 1px #3d3d3d;"><div class="b" style="left:0.00px;top:0.00px;width:131.70px;height:28.20px;background:#8ccb2f;"></div></div><span class="t" style="left:151.30px;top:1472.70px;font:400 20.5px/24.6px 'Liberation Sans',sans-serif;color:#0c2a00;letter-spacing:0.074px;-webkit-text-stroke:0.55px #0c2a00;-webkit-text-stroke-width:0.7px;">Ch 4</span><span class="t" style="left:11.60px;top:1501.40px;font:400 20.5px/24.6px 'Liberation Sans',sans-serif;color:#1c1c1c;letter-spacing:0.118px;">1 V/div</span><span class="t" style="left:11.60px;top:1529.10px;font:400 20.5px/24.6px 'Liberation Sans',sans-serif;color:#1c1c1c;letter-spacing:0.500px;">1 MΩ</span><span class="t" style="left:11.60px;top:1556.60px;font:400 20.5px/24.6px 'Liberation Sans',sans-serif;color:#1c1c1c;letter-spacing:0.453px;">500 MHz</span><span class="t" style="left:107.60px;top:1557.62px;font:700 11.5px/13.8px 'Liberation Sans',sans-serif;color:#1c1c1c;">B</span><span class="t" style="left:115.60px;top:1561.12px;font:700 11.5px/13.8px 'Liberation Sans',sans-serif;color:#1c1c1c;">w</span><span class="t" style="left:151.30px;top:1501.40px;font:400 20.5px/24.6px 'Liberation Sans',sans-serif;color:#1c1c1c;letter-spacing:0.118px;">1 V/div</span><span class="t" style="left:151.30px;top:1529.10px;font:400 20.5px/24.6px 'Liberation Sans',sans-serif;color:#1c1c1c;letter-spacing:0.500px;">1 MΩ</span><span class="t" style="left:151.30px;top:1556.60px;font:400 20.5px/24.6px 'Liberation Sans',sans-serif;color:#1c1c1c;letter-spacing:0.453px;">500 MHz</span><span class="t" style="left:247.30px;top:1557.62px;font:700 11.5px/13.8px 'Liberation Sans',sans-serif;color:#1c1c1c;">B</span><span class="t" style="left:255.30px;top:1561.12px;font:700 11.5px/13.8px 'Liberation Sans',sans-serif;color:#1c1c1c;">w</span><div class="b" style="left:1213.00px;top:1464.60px;width:56.80px;height:116.40px;background:#2b2b2b;border-radius:9px;border:2px solid #625e5c;box-shadow:inset 0 -5px 5px rgba(0,0,0,.28);"></div><div class="b" style="left:1220.00px;top:1477.40px;width:42.80px;height:2.60px;background:#e9e157;border-radius:1.300px;"></div><span class="t" style="left:1233.33px;top:1512.15px;font:400 29px/34.8px 'Liberation Sans',sans-serif;color:#e6e6e6;">1</span><div class="b" style="left:1278.70px;top:1464.60px;width:58.00px;height:116.40px;background:#2b2b2b;border-radius:9px;border:2px solid #625e5c;box-shadow:inset 0 -5px 5px rgba(0,0,0,.28);"></div><div class="b" style="left:1285.70px;top:1477.40px;width:44.00px;height:2.60px;background:#45c4d2;border-radius:1.300px;"></div><span class="t" style="left:1299.63px;top:1512.15px;font:400 29px/34.8px 'Liberation Sans',sans-serif;color:#e6e6e6;">2</span><div class="b" style="left:1352.70px;top:1468.00px;width:1.60px;height:112.00px;background:#4f4f4f;"></div><div class="b" style="left:1573.80px;top:1468.00px;width:1.60px;height:112.00px;background:#4f4f4f;"></div><div class="b" style="left:1663.70px;top:1468.00px;width:1.60px;height:112.00px;background:#4f4f4f;"></div><div class="b" style="left:2655.00px;top:1468.00px;width:1.60px;height:112.00px;background:#4f4f4f;"></div><div class="b" style="left:1368.60px;top:1464.60px;width:56.60px;height:116.40px;background:#2b2b2b;border-radius:9px;border:2px solid #625e5c;box-shadow:inset 0 -5px 5px rgba(0,0,0,.28);"></div><div class="b" style="left:1375.60px;top:1477.40px;width:42.60px;height:2.60px;background:#f08a2c;border-radius:1.300px;"></div><span class="t" style="left:1378.22px;top:1493.52px;font:400 21px/25.2px 'Liberation Sans',sans-serif;color:#e6e6e6;">Add</span><span class="t" style="left:1375.89px;top:1517.72px;font:400 21px/25.2px 'Liberation Sans',sans-serif;color:#e6e6e6;">New</span><span class="t" style="left:1373.56px;top:1541.52px;font:400 21px/25.2px 'Liberation Sans',sans-serif;color:#e6e6e6;">Math</span><div class="b" style="left:1434.20px;top:1464.60px;width:57.40px;height:116.40px;background:#2b2b2b;border-radius:9px;border:2px solid #625e5c;box-shadow:inset 0 -5px 5px rgba(0,0,0,.28);"></div><div class="b" style="left:1441.20px;top:1477.40px;width:43.40px;height:2.60px;background:#b8b4cf;border-radius:1.300px;"></div><span class="t" style="left:1444.22px;top:1493.52px;font:400 21px/25.2px 'Liberation Sans',sans-serif;color:#e6e6e6;">Add</span><span class="t" style="left:1441.89px;top:1517.72px;font:400 21px/25.2px 'Liberation Sans',sans-serif;color:#e6e6e6;">New</span><span class="t" style="left:1446.56px;top:1541.52px;font:400 21px/25.2px 'Liberation Sans',sans-serif;color:#e6e6e6;">Ref</span><div class="b" style="left:1499.90px;top:1464.60px;width:58.10px;height:116.40px;background:#2b2b2b;border-radius:9px;border:2px solid #625e5c;box-shadow:inset 0 -5px 5px rgba(0,0,0,.28);"></div><div class="b" style="left:1506.90px;top:1477.40px;width:44.10px;height:2.60px;background:#b44de0;border-radius:1.300px;"></div><span class="t" style="left:1510.27px;top:1493.52px;font:400 21px/25.2px 'Liberation Sans',sans-serif;color:#e6e6e6;">Add</span><span class="t" style="left:1507.94px;top:1517.72px;font:400 21px/25.2px 'Liberation Sans',sans-serif;color:#e6e6e6;">New</span><span class="t" style="left:1510.86px;top:1541.52px;font:400 21px/25.2px 'Liberation Sans',sans-serif;color:#e6e6e6;">Bus</span><div class="b" style="left:1589.70px;top:1464.60px;width:58.10px;height:116.40px;background:#2b2b2b;border-radius:9px;border:2px solid #625e5c;box-shadow:inset 0 -5px 5px rgba(0,0,0,.28);"></div><div class="b" style="left:1596.70px;top:1477.40px;width:44.10px;height:2.60px;background:#4a4a4a;border-radius:1.300px;"></div><span class="t" style="left:1595.42px;top:1517.92px;font:400 21px/25.2px 'Liberation Sans',sans-serif;color:#e6e6e6;">DVM</span><div class="b" style="left:1679.60px;top:1471.90px;width:187.90px;height:109.10px;background:#cbcbcb;border-radius:6.500px;overflow:hidden;box-shadow:0 0 0 1px #3d3d3d;"><div class="b" style="left:0.00px;top:0.00px;width:187.90px;height:27.60px;background:#59595b;"></div></div><span class="t" style="left:1687.10px;top:1473.80px;font:400 20.5px/24.6px 'Liberation Sans',sans-serif;color:#fff;letter-spacing:0.237px;-webkit-text-stroke:0.55px #fff;-webkit-text-stroke-width:0.7px;">AFG: Sine</span><span class="t" style="left:1686.10px;top:1500.60px;font:400 20.5px/24.6px 'Liberation Sans',sans-serif;color:#1c1c1c;letter-spacing:0.152px;">Freq: 45 MHz</span><span class="t" style="left:1686.10px;top:1528.30px;font:400 20.5px/24.6px 'Liberation Sans',sans-serif;color:#1c1c1c;letter-spacing:-0.012px;">Amp: 5 Vpp</span><span class="t" style="left:1686.10px;top:1555.80px;font:400 20.5px/24.6px 'Liberation Sans',sans-serif;color:#1c1c1c;letter-spacing:0.366px;">Offset: 0 V</span><div class="b" style="left:1878.00px;top:1471.90px;width:290.90px;height:109.10px;background:#cbcbcb;border-radius:6.500px;overflow:hidden;box-shadow:0 0 0 1px #3d3d3d;"><div class="b" style="left:0.00px;top:0.00px;width:290.90px;height:27.60px;background:#59595b;"></div></div><span class="t" style="left:1885.50px;top:1473.80px;font:400 20.5px/24.6px 'Liberation Sans',sans-serif;color:#fff;letter-spacing:1.471px;-webkit-text-stroke:0.55px #fff;-webkit-text-stroke-width:0.7px;">Horizontal</span><span class="t" style="left:1884.50px;top:1500.60px;font:400 20.5px/24.6px 'Liberation Sans',sans-serif;color:#1c1c1c;letter-spacing:0.161px;">10 ns/div</span><span class="t" style="left:1884.50px;top:1528.30px;font:400 20.5px/24.6px 'Liberation Sans',sans-serif;color:#1c1c1c;letter-spacing:-0.502px;">SR: 12.5 GS/s</span><span class="t" style="left:1884.50px;top:1555.80px;font:400 20.5px/24.6px 'Liberation Sans',sans-serif;color:#1c1c1c;letter-spacing:-0.099px;">RL: 1.25 kpts</span><span class="t" style="left:2040.30px;top:1500.60px;font:400 20.5px/24.6px 'Liberation Sans',sans-serif;color:#1c1c1c;letter-spacing:0.075px;">100 ns</span><span class="t" style="left:2040.30px;top:1528.30px;font:400 20.5px/24.6px 'Liberation Sans',sans-serif;color:#1c1c1c;letter-spacing:0.445px;">80 ps/pt</span><span class="t" style="left:2061.50px;top:1555.80px;font:400 20.5px/24.6px 'Liberation Sans',sans-serif;color:#1c1c1c;letter-spacing:0.823px;">19%</span><svg style="left:2041.5px;top:1559.500px" width="11" height="16" viewBox="0 0 11 16"><path d="M0 0h11v10.500L5.500 16 0 10.500z" fill="#e8851c"/></svg><span class="t" style="left:2043.76px;top:1561.51px;font:700 9.5px/11.4px 'DejaVu Sans',sans-serif;color:#111;">T</span><div class="b" style="left:2178.50px;top:1471.90px;width:231.80px;height:109.10px;background:#cbcbcb;border-radius:6.500px;overflow:hidden;box-shadow:0 0 0 1px #3d3d3d;"><div class="b" style="left:0.00px;top:0.00px;width:231.80px;height:27.60px;background:#59595b;"></div></div><span class="t" style="left:2186.00px;top:1473.80px;font:400 20.5px/24.6px 'Liberation Sans',sans-serif;color:#fff;letter-spacing:0.975px;-webkit-text-stroke:0.55px #fff;-webkit-text-stroke-width:0.7px;">Trigger</span><div class="b" style="left:2185.60px;top:1504.20px;width:42.40px;height:21.20px;background:#e8466a;border-radius:7px;border:1.500px solid #7a1c30;"></div><span class="t" style="left:2201.24px;top:1502.87px;font:400 20px/24.0px 'Liberation Sans',sans-serif;color:#fff;">3</span><svg style="left:2242.5px;top:1504.500px" width="26" height="20" viewBox="0 0 26 20"><path d="M1 18.500h6L18 1.500h7" stroke="#4a4496" stroke-width="1.700" fill="none"/></svg><span class="t" style="left:2280.80px;top:1500.60px;font:400 20.5px/24.6px 'Liberation Sans',sans-serif;color:#1c1c1c;letter-spacing:0.243px;">0 V</span><div class="b" style="left:2420.60px;top:1471.90px;width:217.60px;height:109.10px;background:#cbcbcb;border-radius:6.500px;overflow:hidden;box-shadow:0 0 0 1px #3d3d3d;"><div class="b" style="left:0.00px;top:0.00px;width:217.60px;height:27.60px;background:#59595b;"></div></div><span class="t" style="left:2428.10px;top:1473.80px;font:400 20.5px/24.6px 'Liberation Sans',sans-serif;color:#fff;letter-spacing:1.351px;-webkit-text-stroke:0.55px #fff;-webkit-text-stroke-width:0.7px;">Acquisition</span><span class="t" style="left:2427.10px;top:1500.60px;font:400 20.5px/24.6px 'Liberation Sans',sans-serif;color:#1c1c1c;letter-spacing:0.438px;">Manual,</span><span class="t" style="left:2427.10px;top:1528.30px;font:400 20.5px/24.6px 'Liberation Sans',sans-serif;color:#1c1c1c;letter-spacing:0.447px;">Sample: 12 bits</span><span class="t" style="left:2427.10px;top:1555.80px;font:400 20.5px/24.6px 'Liberation Sans',sans-serif;color:#1c1c1c;letter-spacing:0.607px;">9.783 kAcqs</span><span class="t" style="left:2545.50px;top:1500.60px;font:400 20.5px/24.6px 'Liberation Sans',sans-serif;color:#1c1c1c;letter-spacing:-0.062px;">Analyze</span><div class="b" style="left:2672.50px;top:1466.00px;width:130.50px;height:51.20px;background:#1cc21e;border-radius:8px;border:2.500px solid #45d948;"></div><span class="t" style="left:2691.20px;top:1479.64px;font:700 17.5px/21.0px 'DejaVu Sans',sans-serif;color:#fff;letter-spacing:-0.177px;">Triggered</span><div class="b" style="left:2671.40px;top:1526.00px;width:131.60px;height:55.40px;background:#cbcbcb;border-radius:7px;"></div><span class="t" style="left:2675.95px;top:1527.00px;font:400 20.5px/24.6px 'Liberation Sans',sans-serif;color:#1c1c1c;letter-spacing:0.669px;">20 Aug 2024</span><span class="t" style="left:2683.20px;top:1553.10px;font:400 20.5px/24.6px 'Liberation Sans',sans-serif;color:#1c1c1c;letter-spacing:0.316px;">2:03:31 PM</span><div class="b" style="left:2579.80px;top:736.00px;width:6.40px;height:6.40px;background:#d0d0d0;border-radius:2.5px;"></div><div class="b" style="left:2579.80px;top:748.60px;width:6.40px;height:6.40px;background:#d0d0d0;border-radius:2.5px;"></div><div class="b" style="left:2579.80px;top:761.10px;width:6.40px;height:6.40px;background:#d0d0d0;border-radius:2.5px;"></div></div><svg style="left:0;top:0" width="3166" height="1911"><path d="M2788.0 632.5C2801.4 631.1 2855.6 622.9 2884.0 622.5C2912.4 622.1 2966.1 626.8 2991.0 629.5C3015.9 632.2 3043.6 638.8 3062.0 641.5C3080.4 644.2 3111.1 636.0 3122.6 648.5C3134.1 661.0 3137.9 704.0 3144.0 730.5C3150.1 757.0 3162.4 818.2 3166.0 837.5C3169.6 856.8 3170.0 859.7 3170.0 868.5C3170.0 877.3 3169.2 887.5 3166.0 900.5C3162.8 913.5 3154.6 943.0 3147.5 961.5C3140.4 980.0 3127.5 1016.5 3115.5 1032.5C3103.5 1048.5 3082.4 1065.0 3062.0 1075.5C3041.6 1086.0 2994.9 1104.4 2970.0 1107.5C2945.1 1110.6 2907.9 1102.0 2884.0 1097.5C2860.1 1093.0 2822.4 1081.8 2799.0 1075.5C2775.6 1069.2 2734.9 1062.0 2717.0 1052.5C2699.1 1043.0 2679.2 1023.2 2671.0 1008.0C2662.8 992.8 2660.7 967.9 2658.7 944.0C2656.7 920.1 2656.0 862.4 2657.0 837.5C2658.0 812.6 2661.1 784.0 2666.0 766.5C2670.9 749.0 2683.9 725.0 2692.0 712.5C2700.1 700.0 2714.5 685.9 2724.0 677.5C2733.5 669.1 2747.5 658.5 2760.0 652.5C2772.5 646.5 2795.6 638.7 2813.0 634.5C2830.4 630.3 2874.1 624.2 2884.0 622.5" stroke="#a50c10" stroke-width="12.2" fill="none" stroke-linecap="round" stroke-linejoin="round"/></svg></div>
</body></html>
